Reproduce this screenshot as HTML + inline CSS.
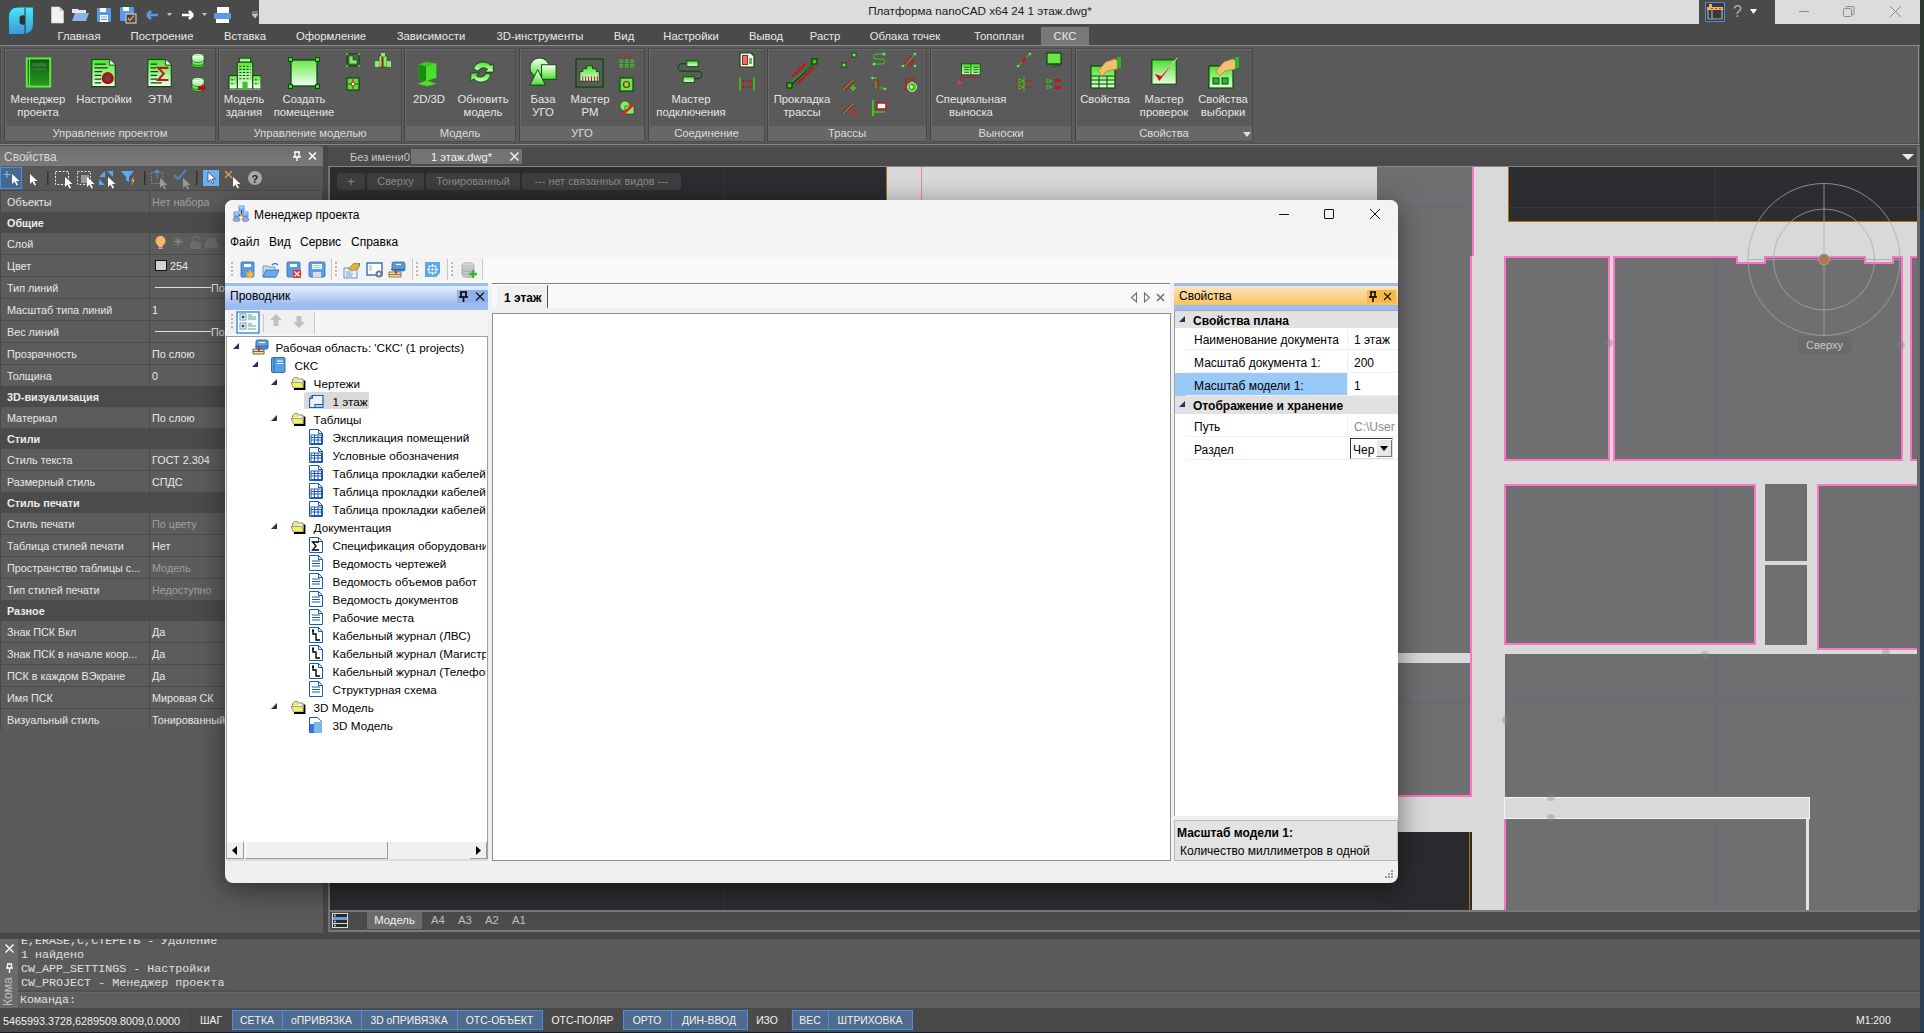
<!DOCTYPE html>
<html><head><meta charset="utf-8">
<style>
*{margin:0;padding:0;box-sizing:border-box}
html,body{width:1924px;height:1033px;overflow:hidden;background:#4a4a4a;font-family:"Liberation Sans",sans-serif;font-size:12px;color:#e6e6e6}
.a{position:absolute}
.t{position:absolute;white-space:nowrap;line-height:1}
.rb{font-size:11.3px}
.pp{font-size:10.8px}
.sbt{font-size:10.4px}
</style></head><body>

<!-- ===== TITLE BAR ===== -->
<div class="a" style="left:0;top:0;width:1924px;height:24px;background:#4a4a4a"></div>
<div class="a" style="left:259px;top:0;width:1440px;height:24px;background:#dcdcdc"></div>
<div class="a" style="left:1775px;top:0;width:145px;height:24px;background:#dcdcdc"></div>
<div class="a" style="left:1920px;top:0;width:4px;height:1033px;background:#2e3830"></div>
<div class="t" style="left:0;top:5px;width:1960px;text-align:center;color:#1a1a1a;font-size:11.7px">Платформа nanoCAD x64 24 1 этаж.dwg*</div>


<!-- logo & quick access -->
<svg class="a" style="left:8px;top:7px" width="26" height="28" viewBox="0 0 26 28">
 <defs><linearGradient id="lg1" x1="0" y1="0" x2="0" y2="1"><stop offset="0" stop-color="#48e8fa"/><stop offset="1" stop-color="#3a98d8"/></linearGradient></defs>
 <path d="M10 0H25.5V17Q25.5 27 15 27.5H0.5V10Q0.5 0 10 0Z" fill="url(#lg1)" stroke="#1a5a70" stroke-width="1"/>
 <path d="M17 1V27M12 10Q13 8 16.5 9V17Q13 18 12 16Z" fill="#333" stroke="#333" stroke-width="1"/>
</svg>
<svg class="a" style="left:50px;top:6px" width="215" height="18" viewBox="0 0 215 18">
 <path d="M1.5 1h8l4 4v12h-12z" fill="#f2f2f2" stroke="#d8d8d8" stroke-width=".6"/><path d="M9.5 1v4h4" fill="#ccc"/>
 <path d="M22 3h6l1 1h7v3H22z" fill="#e6e6e6"/><path d="M25 7h14l-3 8H22z" fill="#8ab4e8"/>
 <rect x="47" y="2" width="14" height="14" rx="1" fill="#5a9ae0"/><rect x="50" y="2" width="6" height="4" fill="#fff"/><rect x="50" y="9" width="8" height="7" fill="#fff"/><path d="M51 11h6M51 13.5h6" stroke="#5a9ae0"/>
 <rect x="70" y="1" width="14" height="14" rx="1" fill="#5a9ae0"/><rect x="73" y="1" width="6" height="4" fill="#fff"/><rect x="76" y="8" width="10" height="9" fill="#444" stroke="#ddd" stroke-width="1"/><path d="M78 12l2 2.5 4-5" stroke="#f8a040" stroke-width="1.3" fill="none"/>
 <path d="M97 9h11M97 9l4-4M97 9l4 4" stroke="#5a9ae0" stroke-width="2.6" fill="none"/>
 <path d="M117 7h5l-2.5 3z" fill="#c8c8c8"/>
 <path d="M143 9h-11M143 9l-4-4M143 9l-4 4" stroke="#fff" stroke-width="2.6" fill="none"/>
 <path d="M152 7h5l-2.5 3z" fill="#c8c8c8"/>
 <rect x="167" y="1" width="12" height="6" fill="#fff"/><rect x="164" y="7" width="17" height="6" rx="1" fill="#5a9ae0"/><rect x="166" y="13" width="13" height="4" fill="#fff"/>
 <path d="M202 6h6M202 8h6l-3 4z" fill="#c8c8c8" stroke="#c8c8c8" stroke-width=".8"/>
</svg>
<!-- title right -->
<div class="a" style="left:1705px;top:2px;width:20px;height:20px;border:1px solid #4a8ee0;background:#3a3a3a"></div>
<svg class="a" style="left:1707px;top:4px" width="16" height="16" viewBox="0 0 16 16"><rect x="2" y="0" width="3" height="3" fill="#f8b060"/><rect x="0" y="3" width="16" height="3" fill="#f8b060"/><path d="M4 4.5h2M8 4.5h2M12 4.5h2" stroke="#666"/><path d="M1 6v9h14V6M5 6v9" fill="none" stroke="#aaa" stroke-width="1.2"/></svg>
<div class="t" style="left:1733px;top:4px;font-size:16px;color:#b0b0b0">?</div>
<svg class="a" style="left:1750px;top:9px" width="7" height="5"><path d="M0 0h7L3.5 5z" fill="#fff"/></svg>
<div class="a" style="left:1799px;top:11px;width:10px;height:1px;background:#8a8a8a"></div>
<svg class="a" style="left:1843px;top:6px" width="12" height="12" viewBox="0 0 12 12"><rect x="0.5" y="2.5" width="8" height="8" rx="1" fill="none" stroke="#8a8a8a"/><path d="M3 2.5V1.5Q3 0.5 4 0.5H10Q11 0.5 11 1.5V7.5Q11 8.5 10 8.5H8.5" fill="none" stroke="#8a8a8a"/></svg>
<svg class="a" style="left:1890px;top:6px" width="11" height="11"><path d="M0 0L11 11M11 0L0 11" stroke="#8a8a8a" stroke-width="1"/></svg>

<!-- ===== RIBBON TABS ===== -->
<div class="a" style="left:1041px;top:27px;width:48px;height:19px;background:#787878"></div>
<div class="t rb" style="left:19px;top:31px;width:120px;text-align:center;color:#e8e8e8">Главная</div>
<div class="t rb" style="left:102px;top:31px;width:120px;text-align:center;color:#e8e8e8">Построение</div>
<div class="t rb" style="left:185px;top:31px;width:120px;text-align:center;color:#e8e8e8">Вставка</div>
<div class="t rb" style="left:271px;top:31px;width:120px;text-align:center;color:#e8e8e8">Оформление</div>
<div class="t rb" style="left:371px;top:31px;width:120px;text-align:center;color:#e8e8e8">Зависимости</div>
<div class="t rb" style="left:480px;top:31px;width:120px;text-align:center;color:#e8e8e8">3D-инструменты</div>
<div class="t rb" style="left:564px;top:31px;width:120px;text-align:center;color:#e8e8e8">Вид</div>
<div class="t rb" style="left:631px;top:31px;width:120px;text-align:center;color:#e8e8e8">Настройки</div>
<div class="t rb" style="left:706px;top:31px;width:120px;text-align:center;color:#e8e8e8">Вывод</div>
<div class="t rb" style="left:765px;top:31px;width:120px;text-align:center;color:#e8e8e8">Растр</div>
<div class="t rb" style="left:845px;top:31px;width:120px;text-align:center;color:#e8e8e8">Облака точек</div>
<div class="t rb" style="left:939px;top:31px;width:120px;text-align:center;color:#e8e8e8">Топоплан</div>
<div class="t rb" style="left:1005px;top:31px;width:120px;text-align:center;color:#e8e8e8">СКС</div>
<!-- ===== RIBBON PANEL ===== -->
<div class="a" style="left:0;top:45px;width:1920px;height:101px;background:#4e4e4e;border-top:1px solid #8a8a8a;border-bottom:1px solid #4a4a4a"></div>
<div class="a" style="left:0;top:144px;width:1920px;height:1px;background:#8c8c8c"></div>
<div class="a" style="left:1px;top:46px;width:1918px;height:97px;background:#5b5b5b;border-right:1px solid #8a8a8a"></div>
<div class="a" style="left:4px;top:48px;width:212px;height:94px;background:#5a5a5a;border:1px solid #4a4a4a;border-left-color:#444;box-shadow:inset 1px 1px 0 #6a6a6a"></div>
<div class="a" style="left:5px;top:126px;width:210px;height:15px;background:#676767"></div>
<div class="t rb" style="left:4px;top:128px;width:212px;text-align:center;color:#dcdcdc">Управление проектом</div>
<div class="a" style="left:218px;top:48px;width:184px;height:94px;background:#5a5a5a;border:1px solid #4a4a4a;border-left-color:#444;box-shadow:inset 1px 1px 0 #6a6a6a"></div>
<div class="a" style="left:219px;top:126px;width:182px;height:15px;background:#676767"></div>
<div class="t rb" style="left:218px;top:128px;width:184px;text-align:center;color:#dcdcdc">Управление моделью</div>
<div class="a" style="left:404px;top:48px;width:112px;height:94px;background:#5a5a5a;border:1px solid #4a4a4a;border-left-color:#444;box-shadow:inset 1px 1px 0 #6a6a6a"></div>
<div class="a" style="left:405px;top:126px;width:110px;height:15px;background:#676767"></div>
<div class="t rb" style="left:404px;top:128px;width:112px;text-align:center;color:#dcdcdc">Модель</div>
<div class="a" style="left:519px;top:48px;width:126px;height:94px;background:#5a5a5a;border:1px solid #4a4a4a;border-left-color:#444;box-shadow:inset 1px 1px 0 #6a6a6a"></div>
<div class="a" style="left:520px;top:126px;width:124px;height:15px;background:#676767"></div>
<div class="t rb" style="left:519px;top:128px;width:126px;text-align:center;color:#dcdcdc">УГО</div>
<div class="a" style="left:648px;top:48px;width:117px;height:94px;background:#5a5a5a;border:1px solid #4a4a4a;border-left-color:#444;box-shadow:inset 1px 1px 0 #6a6a6a"></div>
<div class="a" style="left:649px;top:126px;width:115px;height:15px;background:#676767"></div>
<div class="t rb" style="left:648px;top:128px;width:117px;text-align:center;color:#dcdcdc">Соединение</div>
<div class="a" style="left:767px;top:48px;width:160px;height:94px;background:#5a5a5a;border:1px solid #4a4a4a;border-left-color:#444;box-shadow:inset 1px 1px 0 #6a6a6a"></div>
<div class="a" style="left:768px;top:126px;width:158px;height:15px;background:#676767"></div>
<div class="t rb" style="left:767px;top:128px;width:160px;text-align:center;color:#dcdcdc">Трассы</div>
<div class="a" style="left:930px;top:48px;width:142px;height:94px;background:#5a5a5a;border:1px solid #4a4a4a;border-left-color:#444;box-shadow:inset 1px 1px 0 #6a6a6a"></div>
<div class="a" style="left:931px;top:126px;width:140px;height:15px;background:#676767"></div>
<div class="t rb" style="left:930px;top:128px;width:142px;text-align:center;color:#dcdcdc">Выноски</div>
<div class="a" style="left:1075px;top:48px;width:178px;height:94px;background:#5a5a5a;border:1px solid #4a4a4a;border-left-color:#444;box-shadow:inset 1px 1px 0 #6a6a6a"></div>
<div class="a" style="left:1076px;top:126px;width:176px;height:15px;background:#676767"></div>
<div class="t rb" style="left:1075px;top:128px;width:178px;text-align:center;color:#dcdcdc">Свойства</div>
<div class="a" style="left:23px;top:57px;width:30px;height:31px"><svg width="30" height="31" viewBox="0 0 32 32"><defs><linearGradient id="gm" x1="0" y1="0" x2="0" y2="1"><stop offset="0" stop-color="#0c5a0c"/><stop offset="1" stop-color="#2a9a22"/></linearGradient></defs><rect x="4" y="1" width="25" height="30" fill="url(#gm)" stroke="#5cf03c" stroke-width="2"/><path d="M7 1v30" stroke="#5cf03c" stroke-width="1.2"/><rect x="10" y="6" width="15" height="3.5" fill="#4a7a4a" opacity=".8"/><rect x="10" y="12" width="15" height="1.5" fill="#4a7a4a" opacity=".8"/></svg></div>
<div class="t rb" style="left:-22px;top:94px;width:120px;text-align:center;color:#e6e6e6">Менеджер</div>
<div class="t rb" style="left:-22px;top:107px;width:120px;text-align:center;color:#e6e6e6">проекта</div>
<div class="a" style="left:89px;top:58px;width:30px;height:31px"><svg width="30" height="31" viewBox="0 0 32 32"><defs><linearGradient id="gs" x1="0" y1="0" x2="0" y2="1"><stop offset="0" stop-color="#4ae42a"/><stop offset="1" stop-color="#f4fff0"/></linearGradient></defs><path d="M3 1h19l6 6v23H3z" fill="url(#gs)" stroke="#0a4a0a" stroke-width="1.2"/><path d="M22 1v6h6" fill="#fff" stroke="#0a4a0a"/><path d="M6 6h12M6 10h14M6 14h8M6 18h7M6 22h7M6 26h7" stroke="#0a4a0a" stroke-width="1.1"/><circle cx="20" cy="21" r="6.5" fill="#b01010"/><circle cx="20" cy="21" r="3" fill="#505050"/></svg></div>
<div class="t rb" style="left:44px;top:94px;width:120px;text-align:center;color:#e6e6e6">Настройки</div>
<div class="a" style="left:145px;top:58px;width:30px;height:31px"><svg width="30" height="31" viewBox="0 0 32 32"><defs><linearGradient id="ge" x1="0" y1="0" x2="0" y2="1"><stop offset="0" stop-color="#4ae42a"/><stop offset="1" stop-color="#f4fff0"/></linearGradient></defs><path d="M3 1h19l6 6v23H3z" fill="url(#ge)" stroke="#0a4a0a" stroke-width="1.2"/><path d="M22 1v6h6" fill="#fff" stroke="#0a4a0a"/><path d="M6 6h7M6 10h6M6 14h8M6 18h7M6 22h7M6 26h12" stroke="#0a4a0a" stroke-width="1.1"/><path d="M25 10H14l6 6-6 7h11" fill="none" stroke="#c01818" stroke-width="2.2"/></svg></div>
<div class="t rb" style="left:100px;top:94px;width:120px;text-align:center;color:#e6e6e6">ЭТМ</div>
<div class="a" style="left:228px;top:57px;width:33px;height:33px"><svg width="33" height="33" viewBox="0 0 32 32"><defs><linearGradient id="gb" x1="0" y1="0" x2="0" y2="1"><stop offset="0" stop-color="#5ae83a"/><stop offset="1" stop-color="#ffffff"/></linearGradient></defs><rect x="11" y="1" width="11" height="4" fill="url(#gb)" stroke="#0a4a0a"/><rect x="9" y="5" width="15" height="26" fill="url(#gb)" stroke="#0a4a0a"/><rect x="1" y="18" width="8" height="13" fill="url(#gb)" stroke="#0a4a0a"/><rect x="24" y="18" width="8" height="13" fill="url(#gb)" stroke="#0a4a0a"/><path d="M11 9h11M11 12h11M11 15h11M11 18h11M11 21h11M3 22h4M26 22h4M3 26h4M26 26h4" stroke="#0a4a0a" stroke-dasharray="2 1.5"/><rect x="14" y="24" width="5" height="7" fill="#3ac81a"/><path d="M1 32h31" stroke="#ccc"/></svg></div>
<div class="t rb" style="left:184px;top:94px;width:120px;text-align:center;color:#e6e6e6">Модель</div>
<div class="t rb" style="left:184px;top:107px;width:120px;text-align:center;color:#e6e6e6">здания</div>
<div class="a" style="left:288px;top:57px;width:32px;height:32px"><svg width="32" height="32" viewBox="0 0 32 32"><defs><linearGradient id="gr" x1="0" y1="0" x2="0" y2="1"><stop offset="0" stop-color="#6ae84a"/><stop offset="1" stop-color="#f0fff0"/></linearGradient></defs><rect x="3" y="3" width="26" height="26" fill="url(#gr)" stroke="#0a4a0a" stroke-width="1.3"/><rect x="0.5" y="0.5" width="4" height="4" fill="#3ae81a" stroke="#0a4a0a"/><rect x="27.5" y="0.5" width="4" height="4" fill="#3ae81a" stroke="#0a4a0a"/><rect x="0.5" y="27.5" width="4" height="4" fill="#3ae81a" stroke="#0a4a0a"/><rect x="27.5" y="27.5" width="4" height="4" fill="#3ae81a" stroke="#0a4a0a"/></svg></div>
<div class="t rb" style="left:244px;top:94px;width:120px;text-align:center;color:#e6e6e6">Создать</div>
<div class="t rb" style="left:244px;top:107px;width:120px;text-align:center;color:#e6e6e6">помещение</div>
<div class="a" style="left:416px;top:58px;width:27px;height:31px"><svg width="27" height="31" viewBox="0 0 32 32"><path d="M3 5l9-3 12 2v17l-12 4-9-3z" fill="#3ac81a"/><path d="M3 5l9 3v17l-9-3z" fill="#1a8a10"/><path d="M12 8l12-4v17l-12 4z" fill="#4ae02a"/><path d="M2 28l11-4 11 4-11 3z" fill="#4ae02a"/></svg></div>
<div class="t rb" style="left:369px;top:94px;width:120px;text-align:center;color:#e6e6e6">2D/3D</div>
<div class="a" style="left:468px;top:58px;width:30px;height:30px"><svg width="30" height="30" viewBox="0 0 32 32"><defs><linearGradient id="gu" x1="0" y1="0" x2="0" y2="1"><stop offset="0" stop-color="#4ae02a"/><stop offset="1" stop-color="#d8ffc8"/></linearGradient></defs><path d="M6 12a10 9 0 0 1 18-4l3-2v9h-9l3-3a6 5 0 0 0-10 2z" fill="url(#gu)" stroke="#0a4a0a" stroke-width="1"/><path d="M24 17a10 9 0 0 1-18 5l-3 3v-9h9l-3 3a6 5 0 0 0 10-3z" fill="url(#gu)" stroke="#0a4a0a" stroke-width="1"/></svg></div>
<div class="t rb" style="left:423px;top:94px;width:120px;text-align:center;color:#e6e6e6">Обновить</div>
<div class="t rb" style="left:423px;top:107px;width:120px;text-align:center;color:#e6e6e6">модель</div>
<div class="a" style="left:528px;top:57px;width:31px;height:31px"><svg width="31" height="31" viewBox="0 0 32 32"><defs><linearGradient id="gg" x1="0" y1="0" x2="0" y2="1"><stop offset="0" stop-color="#f8fff8"/><stop offset="1" stop-color="#4ae02a"/></linearGradient></defs><circle cx="12" cy="11" r="10" fill="url(#gg)" stroke="#0a4a0a"/><rect x="14" y="8" width="15" height="15" fill="url(#gg)" stroke="#0a4a0a"/><path d="M10 13l-8 16h16z" fill="url(#gg)" stroke="#0a4a0a"/></svg></div>
<div class="t rb" style="left:483px;top:94px;width:120px;text-align:center;color:#e6e6e6">База</div>
<div class="t rb" style="left:483px;top:107px;width:120px;text-align:center;color:#e6e6e6">УГО</div>
<div class="a" style="left:575px;top:58px;width:31px;height:31px"><svg width="31" height="31" viewBox="0 0 32 32"><defs><linearGradient id="gp" x1="0" y1="0" x2="0" y2="1"><stop offset="0" stop-color="#4ae02a"/><stop offset="1" stop-color="#e8ffe0"/></linearGradient></defs><rect x="1" y="1" width="28" height="29" fill="none" stroke="#0a4a0a" stroke-width="1.4"/><path d="M5 24V14h3v-3h4V8h6v3h4v3h3v10z" fill="url(#gp)" stroke="#0a4a0a"/><path d="M8 19v5M11 19v5M14 19v5M17 19v5M20 19v5M23 19v5" stroke="#b01010" stroke-width="1"/></svg></div>
<div class="t rb" style="left:530px;top:94px;width:120px;text-align:center;color:#e6e6e6">Мастер</div>
<div class="t rb" style="left:530px;top:107px;width:120px;text-align:center;color:#e6e6e6">РМ</div>
<div class="a" style="left:676px;top:58px;width:31px;height:30px"><svg width="31" height="30" viewBox="0 0 32 32"><defs><linearGradient id="gc" x1="0" y1="0" x2="0" y2="1"><stop offset="0" stop-color="#3ae01a"/><stop offset="1" stop-color="#f0fff0"/></linearGradient></defs><path d="M10 6H6a4 4 0 0 0 0 8h17a4 4 0 0 1 0 8h-4" fill="none" stroke="#0a4a0a" stroke-width="1.1"/><rect x="11" y="3" width="12" height="6" fill="url(#gc)" stroke="#0a4a0a"/><rect x="7" y="20" width="12" height="6" fill="url(#gc)" stroke="#0a4a0a"/></svg></div>
<div class="t rb" style="left:631px;top:94px;width:120px;text-align:center;color:#e6e6e6">Мастер</div>
<div class="t rb" style="left:631px;top:107px;width:120px;text-align:center;color:#e6e6e6">подключения</div>
<div class="a" style="left:786px;top:57px;width:32px;height:32px"><svg width="32" height="32" viewBox="0 0 32 32"><path d="M4 29L28 5" stroke="#0a4a0a" stroke-width="2"/><path d="M5 26L27 6" stroke="#3ac81a" stroke-width="1"/><path d="M6 20L20 6M12 26L28 10" stroke="#c01818" stroke-width="2.2"/><rect x="1" y="26" width="5" height="5" fill="#3ac81a" stroke="#0a4a0a" stroke-width="1.4"/><rect x="26" y="2" width="5" height="5" fill="#3ac81a" stroke="#0a4a0a" stroke-width="1.4"/></svg></div>
<div class="t rb" style="left:742px;top:94px;width:120px;text-align:center;color:#e6e6e6">Прокладка</div>
<div class="t rb" style="left:742px;top:107px;width:120px;text-align:center;color:#e6e6e6">трассы</div>
<div class="a" style="left:955px;top:63px;width:30px;height:27px"><svg width="30" height="27" viewBox="0 0 32 32"><defs><linearGradient id="gk" x1="0" y1="0" x2="0" y2="1"><stop offset="0" stop-color="#4ae02a"/><stop offset="1" stop-color="#c8ffb8"/></linearGradient></defs><rect x="6" y="1" width="22" height="13" fill="url(#gk)" stroke="#0a4a0a"/><path d="M17 1v13M9 5h6M9 8h6M9 11h6M20 5h6M20 8h6M20 11h6" stroke="#0a4a0a"/><path d="M28 17H6L3 23" stroke="#c01818" stroke-width="1.2" fill="none"/><path d="M2 20l5 3-5 3z" fill="#e0308a"/></svg></div>
<div class="t rb" style="left:911px;top:94px;width:120px;text-align:center;color:#e6e6e6">Специальная</div>
<div class="t rb" style="left:911px;top:107px;width:120px;text-align:center;color:#e6e6e6">выноска</div>
<div class="a" style="left:1089px;top:57px;width:32px;height:32px"><svg width="32" height="32" viewBox="0 0 32 32"><defs><linearGradient id="gq" x1="0" y1="0" x2="0" y2="1"><stop offset="0" stop-color="#4ae02a"/><stop offset="1" stop-color="#e0ffd8"/></linearGradient></defs><rect x="2" y="9" width="24" height="22" fill="url(#gq)" stroke="#0a4a0a" stroke-width="1.2"/><path d="M2 19h24M2 23h24M2 27h24M10 19v12M18 19v12" stroke="#0a4a0a"/><path d="M9 14l8-9 9-3 4 3-2 7-10 2-5 5z" fill="#f2c070" stroke="#c88838"/><rect x="28" y="0" width="4" height="11" fill="#2ab82a"/></svg></div>
<div class="t rb" style="left:1045px;top:94px;width:120px;text-align:center;color:#e6e6e6">Свойства</div>
<div class="a" style="left:1150px;top:57px;width:30px;height:30px"><svg width="30" height="30" viewBox="0 0 32 32"><defs><linearGradient id="gz" x1="0" y1="0" x2="0" y2="1"><stop offset="0" stop-color="#4ae02a"/><stop offset="1" stop-color="#e8ffe0"/></linearGradient></defs><rect x="2" y="3" width="26" height="26" fill="url(#gz)" stroke="#0a4a0a" stroke-width="1.2"/><path d="M4 17l6 9 19-25-17 19z" fill="#d01010" stroke="#fff" stroke-width=".6"/></svg></div>
<div class="t rb" style="left:1104px;top:94px;width:120px;text-align:center;color:#e6e6e6">Мастер</div>
<div class="t rb" style="left:1104px;top:107px;width:120px;text-align:center;color:#e6e6e6">проверок</div>
<div class="a" style="left:1207px;top:57px;width:32px;height:32px"><svg width="32" height="32" viewBox="0 0 32 32"><defs><linearGradient id="gx" x1="0" y1="0" x2="0" y2="1"><stop offset="0" stop-color="#4ae02a"/><stop offset="1" stop-color="#e0ffd8"/></linearGradient></defs><rect x="2" y="9" width="24" height="22" fill="url(#gx)" stroke="#0a4a0a" stroke-width="1.2"/><rect x="6" y="21" width="6" height="6" fill="#2ab82a" stroke="#0a4a0a"/><rect x="15" y="21" width="6" height="6" fill="#2ab82a" stroke="#0a4a0a"/><path d="M9 14l8-9 9-3 4 3-2 7-10 2-5 5z" fill="#f2c070" stroke="#c88838"/><rect x="28" y="0" width="4" height="11" fill="#2ab82a"/></svg></div>
<div class="t rb" style="left:1163px;top:94px;width:120px;text-align:center;color:#e6e6e6">Свойства</div>
<div class="t rb" style="left:1163px;top:107px;width:120px;text-align:center;color:#e6e6e6">выборки</div>
<div class="a" style="left:190px;top:52px;width:16px;height:16px"><svg width="16" height="16" viewBox="0 0 16 16"><defs><linearGradient id="d1" x1="0" y1="0" x2="0" y2="1"><stop offset="0" stop-color="#f0fff0"/><stop offset="1" stop-color="#3ad81a"/></linearGradient></defs><ellipse cx="8" cy="4" rx="6" ry="2.5" fill="url(#d1)" stroke="#0a4a0a" stroke-width=".6"/><path d="M2 4v9a6 2.5 0 0 0 12 0V4" fill="url(#d1)" stroke="#0a4a0a" stroke-width=".6"/><path d="M2 8a6 2.5 0 0 0 12 0M2 11a6 2.5 0 0 0 12 0" fill="none" stroke="#0a4a0a" stroke-width=".6"/></svg></div>
<div class="a" style="left:190px;top:76px;width:16px;height:16px"><svg width="16" height="16" viewBox="0 0 16 16"><defs><linearGradient id="d1" x1="0" y1="0" x2="0" y2="1"><stop offset="0" stop-color="#f0fff0"/><stop offset="1" stop-color="#3ad81a"/></linearGradient></defs><ellipse cx="8" cy="4" rx="6" ry="2.5" fill="url(#d1)" stroke="#0a4a0a" stroke-width=".6"/><path d="M2 4v9a6 2.5 0 0 0 12 0V4" fill="url(#d1)" stroke="#0a4a0a" stroke-width=".6"/><path d="M2 8a6 2.5 0 0 0 12 0M2 11a6 2.5 0 0 0 12 0" fill="none" stroke="#0a4a0a" stroke-width=".6"/><path d="M8 10h4V8l4 4-4 4v-2H8z" fill="#b01010"/></svg></div>
<div class="a" style="left:345px;top:52px;width:16px;height:16px"><svg width="16" height="16" viewBox="0 0 16 16"><rect x="2" y="2" width="12" height="12" fill="none" stroke="#0a4a0a" stroke-width="1.2"/><path d="M4 4h4v4h4v4H4z" fill="#8ae86a" stroke="#0a4a0a" stroke-width=".6"/><circle cx="2" cy="2" r="1.2" fill="#3ac81a"/><circle cx="14" cy="2" r="1.2" fill="#3ac81a"/><circle cx="2" cy="14" r="1.2" fill="#3ac81a"/><circle cx="14" cy="14" r="1.2" fill="#3ac81a"/></svg></div>
<div class="a" style="left:345px;top:76px;width:16px;height:16px"><svg width="16" height="16" viewBox="0 0 16 16"><rect x="2" y="2" width="12" height="12" fill="#5ae03a" stroke="#0a4a0a" stroke-width="1.2"/><path d="M8 3v10M3 8h10" stroke="#b01010" stroke-width="1"/><rect x="6.5" y="6.5" width="3" height="3" fill="#fff" stroke="#b01010" stroke-width=".6"/></svg></div>
<div class="a" style="left:375px;top:52px;width:16px;height:16px"><svg width="16" height="16" viewBox="0 0 16 16"><rect x="4" y="4" width="8" height="11" fill="#8ae86a" stroke="#0a4a0a" stroke-width=".6"/><rect x="6" y="1" width="4" height="3" fill="#8ae86a"/><rect x="6.5" y="5" width="2" height="10" fill="#b01010"/><rect x="0" y="9" width="4" height="6" fill="#8ae86a"/><rect x="12" y="9" width="4" height="6" fill="#8ae86a"/></svg></div>
<div class="a" style="left:619px;top:52px;width:16px;height:16px"><svg width="16" height="16" viewBox="0 0 16 16"><text x="0" y="6" font-size="6" fill="#c01818" font-family="Liberation Sans">1 2 3</text><g fill="none" stroke="#3ac81a" stroke-width="1"><rect x="1" y="8" width="2.5" height="2.5"/><rect x="6.5" y="8" width="2.5" height="2.5"/><rect x="12" y="8" width="2.5" height="2.5"/><rect x="1" y="12.5" width="2.5" height="2.5"/><rect x="6.5" y="12.5" width="2.5" height="2.5"/><rect x="12" y="12.5" width="2.5" height="2.5"/></g></svg></div>
<div class="a" style="left:619px;top:77px;width:16px;height:16px"><svg width="16" height="16" viewBox="0 0 16 16"><rect x="1" y="1" width="13" height="13" fill="#6ae84a" stroke="#0a4a0a" stroke-width="1.2"/><circle cx="7.5" cy="7.5" r="3" fill="none" stroke="#b01010" stroke-width="1.2"/></svg></div>
<div class="a" style="left:619px;top:100px;width:16px;height:16px"><svg width="16" height="16" viewBox="0 0 16 16"><circle cx="6" cy="6" r="5" fill="#8ae86a" stroke="#0a4a0a" stroke-width=".6"/><rect x="6" y="6" width="9" height="8" fill="#8ae86a" stroke="#0a4a0a" stroke-width=".6"/><path d="M3 15l12-11" stroke="#e02020" stroke-width="2.4"/></svg></div>
<div class="a" style="left:739px;top:52px;width:16px;height:16px"><svg width="16" height="16" viewBox="0 0 16 16"><path d="M1 1h11l3 3v11H1z" fill="#e8ffe0" stroke="#0a4a0a" stroke-width="1.2"/><rect x="3" y="3" width="6" height="10" fill="#c01818"/><path d="M4 5h4M4 7h4M4 9h4M4 11h4" stroke="#fff" stroke-width=".8"/><path d="M10 7h3M10 9h3M10 11h3" stroke="#0a4a0a"/></svg></div>
<div class="a" style="left:739px;top:76px;width:16px;height:16px"><svg width="16" height="16" viewBox="0 0 16 16"><path d="M1 1v14M15 1v14" stroke="#3ac81a" stroke-width="1.6"/><path d="M3 5h10M3 11h10" stroke="#c01818" stroke-width="1.1"/><path d="M3 5l2-2v4zM13 5l-2-2v4zM3 11l2-2v4zM13 11l-2-2v4z" fill="#c01818"/></svg></div>
<div class="a" style="left:841px;top:52px;width:16px;height:16px"><svg width="16" height="16" viewBox="0 0 16 16"><path d="M3 13L13 3" stroke="#c01818" stroke-width="1"/><rect x="1" y="11" width="4" height="4" fill="#6ae84a" stroke="#0a4a0a"/><rect x="11" y="1" width="4" height="4" fill="#6ae84a" stroke="#0a4a0a"/></svg></div>
<div class="a" style="left:841px;top:76px;width:16px;height:16px"><svg width="16" height="16" viewBox="0 0 16 16"><path d="M1 13L11 3M3 15L13 5M5 15l8-8" stroke="#c01818" stroke-width="1"/><path d="M2 14L12 4" stroke="#3ac81a"/><path d="M12 9v6M9 12h6" stroke="#3ac81a" stroke-width="2"/></svg></div>
<div class="a" style="left:841px;top:100px;width:16px;height:16px"><svg width="16" height="16" viewBox="0 0 16 16"><path d="M1 13L11 3M3 15L13 5" stroke="#c01818" stroke-width="1"/><path d="M2 14L12 4" stroke="#3ac81a"/><path d="M10 10l5 5M15 10l-5 5" stroke="#e02020" stroke-width="1.6"/></svg></div>
<div class="a" style="left:871px;top:52px;width:16px;height:16px"><svg width="16" height="16" viewBox="0 0 16 16"><path d="M13 2H5a2.5 2.5 0 0 0 0 5h6a2.5 2.5 0 0 1 0 5H3" fill="none" stroke="#3ac81a" stroke-width="1"/><circle cx="13" cy="2" r="1.5" fill="#6ae84a"/><circle cx="3" cy="12" r="1.5" fill="#6ae84a"/></svg></div>
<div class="a" style="left:871px;top:76px;width:16px;height:16px"><svg width="16" height="16" viewBox="0 0 16 16"><path d="M1 2h4v10h9" fill="none" stroke="#3ac81a" stroke-width="1.2"/><path d="M4 4h3v10" fill="none" stroke="#c01818" stroke-width="1.4"/><circle cx="1.5" cy="2" r="1.3" fill="#6ae84a"/><circle cx="14" cy="13" r="1.3" fill="#6ae84a"/></svg></div>
<div class="a" style="left:871px;top:100px;width:16px;height:16px"><svg width="16" height="16" viewBox="0 0 16 16"><path d="M2 0v16" stroke="#3ac81a" stroke-width="2"/><path d="M3 12h11" stroke="#3ac81a" stroke-width="1.5"/><rect x="6" y="3" width="9" height="6" fill="#fff" stroke="#c01818" stroke-width="1.5"/></svg></div>
<div class="a" style="left:901px;top:52px;width:16px;height:16px"><svg width="16" height="16" viewBox="0 0 16 16"><path d="M2 14L11 3M6 14l7-7M9 14l4-4" stroke="#c01818" stroke-width="1.2"/><path d="M4 14L13 3" stroke="#3ac81a"/><circle cx="2" cy="14" r="1.3" fill="#6ae84a"/><circle cx="14" cy="2" r="1.3" fill="#6ae84a"/><circle cx="14" cy="14" r="1.3" fill="#6ae84a"/></svg></div>
<div class="a" style="left:901px;top:76px;width:16px;height:16px"><svg width="16" height="16" viewBox="0 0 16 16"><path d="M2 13h3V3h9M5 14h3V6h7" fill="none" stroke="#c01818" stroke-width="1.2"/><circle cx="11" cy="11" r="4.5" fill="#3ac81a" stroke="#fff" stroke-width=".8"/><path d="M9.5 9v4l3-2z" fill="#fff"/></svg></div>
<div class="a" style="left:1016px;top:52px;width:16px;height:16px"><svg width="16" height="16" viewBox="0 0 16 16"><path d="M2 14L14 2" stroke="#3ac81a" stroke-width="1"/><path d="M5 9l4-4 2 2-4 4z" fill="#c01818"/><circle cx="2" cy="14" r="1.3" fill="#6ae84a"/><circle cx="14" cy="2" r="1.3" fill="#6ae84a"/></svg></div>
<div class="a" style="left:1016px;top:76px;width:16px;height:16px"><svg width="16" height="16" viewBox="0 0 16 16"><path d="M0 5h16M0 11h16" stroke="#c01818" stroke-width="1"/><path d="M8 1v14" stroke="#3ac81a"/><path d="M3 3l5 2-5 2zM3 9l5 2-5 2z" fill="none" stroke="#3ac81a"/></svg></div>
<div class="a" style="left:1046px;top:52px;width:16px;height:16px"><svg width="16" height="16" viewBox="0 0 16 16"><rect x="1" y="1" width="14" height="11" fill="#6ae84a" stroke="#0a4a0a" stroke-width="1.2"/><path d="M1 12h14M6 14h8" stroke="#0a4a0a" stroke-dasharray="2 1"/></svg></div>
<div class="a" style="left:1046px;top:76px;width:16px;height:16px"><svg width="16" height="16" viewBox="0 0 16 16"><path d="M1 3l5 2-5 2zM1 9l5 2-5 2z" fill="none" stroke="#3ac81a"/><rect x="9" y="3" width="6" height="3" fill="#c01818"/><rect x="9" y="10" width="6" height="3" fill="#c01818"/></svg></div>
<svg class="a" style="left:1243px;top:132px" width="8" height="5"><path d="M0 0h8L4 5z" fill="#e0e0e0"/></svg>
<!-- ===== PROPERTIES PANEL ===== -->
<div class="a" style="left:0;top:146px;width:323px;height:787px;background:#5a5a5a;overflow:hidden">
<div class="a" style="left:0;top:0;width:323px;height:20px;background:linear-gradient(#6e6e6e,#7a7a7a);border-top-right-radius:3px"></div>
<div class="t" style="left:4px;top:5px;color:#d6d6d6;font-size:12px">Свойства</div>
<svg class="a" style="left:292px;top:5px" width="28" height="10" viewBox="0 0 28 10">
<path d="M2 1h6M3 1v5M7 1v5M1 6h8M5 6v4" stroke="#fff" stroke-width="1.4" fill="none"/>
<path d="M17 1.5L24 8.5M24 1.5L17 8.5" stroke="#fff" stroke-width="1.6"/>
</svg>
<div class="a" style="left:0;top:20px;width:323px;height:24px;background:#575757"></div>
<svg class="a" style="left:0;top:20px" width="270" height="24" viewBox="0 0 270 24">
<rect x="0.5" y="1.5" width="21" height="21" fill="#48678c" stroke="#4a90e2"/>
<path d="M7 5v7M3.5 8.5h7" stroke="#7ab8f8" stroke-width="1.2"/><path d="M12 8v10l2.5-2.5 2 4 1.5-.8-2-3.8h3.5z" fill="#fff"/>
<path d="M30 8v10l2.5-2.5 2 4 1.5-.8-2-3.8h3.5z" fill="#fff"/>
<rect x="47" y="5" width="1.5" height="14" fill="#333"/>
<rect x="55.5" y="5.5" width="13" height="13" fill="none" stroke="#eee" stroke-dasharray="2 1.5"/><path d="M65 11v10l2.5-2.5 2 4 1.5-.8-2-3.8h3.5z" fill="#fff"/>
<rect x="77.5" y="5.5" width="13" height="13" fill="none" stroke="#ddd" stroke-dasharray="2 1.5"/><rect x="81" y="9" width="8" height="8" fill="#999"/><path d="M87 11v10l2.5-2.5 2 4 1.5-.8-2-3.8h3.5z" fill="#fff"/>
<path d="M99 11l6-6v6zM99 13v6h6zM107 5h6v6z" fill="#5aa8f8"/><path d="M108 11v10l2.5-2.5 2 4 1.5-.8-2-3.8h3.5z" fill="#fff"/>
<path d="M121 5h13l-5 6v5l-3-2v-3z" fill="#5aa8f8"/><path d="M134 10l-3 5h2l-2 5 4-6h-2z" fill="#f0a860"/>
<rect x="144" y="5" width="1.5" height="14" fill="#333"/>
<rect x="151.5" y="6.5" width="11" height="11" fill="none" stroke="#888" stroke-dasharray="2 1.5"/><path d="M157 4v8M154.5 6.5l2.5-2.5 2.5 2.5" stroke="#5a8ac8" stroke-width="1.3" fill="none"/><path d="M160 12v10l2.5-2.5 2 4 1.5-.8-2-3.8h3.5z" fill="#999"/>
<path d="M174 9l4 4 8-9" stroke="#5a7ab8" stroke-width="2.5" fill="none"/><path d="M183 12v10l2.5-2.5 2 4 1.5-.8-2-3.8h3.5z" fill="#999"/>
<rect x="196" y="5" width="1.5" height="14" fill="#333"/>
<rect x="203" y="4" width="16" height="16" fill="#6ab0f8"/><path d="M208 6v10l2.5-2.5 2 4 1.5-.8-2-3.8h3.5z" fill="#fff"/><path d="M208 6v10l2.5-2.5 2 4 1.5-.8-2-3.8h3.5z" fill="none" stroke="#333" stroke-width=".7"/>
<path d="M225 5l7 7M232 5l-7 7" stroke="#f0a050" stroke-width="1.1"/><path d="M233 11v10l2.5-2.5 2 4 1.5-.8-2-3.8h3.5z" fill="#fff"/>
<circle cx="255" cy="12" r="7" fill="#aaa"/><text x="251.5" y="16.5" font-size="11" font-weight="bold" fill="#222" font-family="Liberation Sans">?</text>
</svg>
<div class="a" style="left:0;top:44px;width:323px;height:540px;background:#4a4a4a"></div>
<div class="a" style="left:0;top:0;width:323px;height:786px">
<div class="a" style="left:0;top:-146px;width:323px;height:1033px">
<div class="a" style="left:1px;top:191px;width:148px;height:21px;background:#5c5c5c"></div>
<div class="a" style="left:150px;top:191px;width:172px;height:21px;background:#5c5c5c"></div>
<div class="t pp" style="left:7px;top:197px;color:#e8e8e8">Объекты</div>
<div class="t pp" style="left:152px;top:197px;color:#a0a0a0">Нет набора</div>
<div class="a" style="left:1px;top:212px;width:322px;height:20px;background:#4b4b4b"></div>
<div class="t pp" style="left:7px;top:218px;font-weight:bold;color:#ececec">Общие</div>
<div class="a" style="left:1px;top:233px;width:148px;height:21px;background:#5c5c5c"></div>
<div class="a" style="left:150px;top:233px;width:172px;height:21px;background:#5c5c5c"></div>
<div class="t pp" style="left:7px;top:239px;color:#e8e8e8">Слой</div>
<svg class="a" style="left:154px;top:235px" width="70" height="16" viewBox="0 0 70 16">
<circle cx="6.5" cy="6" r="5" fill="#f7b56a"/><rect x="4.5" y="10" width="4" height="2" fill="#f0c080"/><rect x="4.5" y="12.5" width="4" height="1.5" fill="#d8b080"/>
<path d="M24 2v9M19.5 6.5h9M21 3.5l6 6M27 3.5l-6 6" stroke="#888" stroke-width="1"/>
<rect x="36" y="7" width="11" height="7" fill="#6c6c6c"/><path d="M39 7V4a3 3 0 0 1 6 0" fill="none" stroke="#6c6c6c" stroke-width="1.5"/>
<rect x="53" y="3" width="9" height="4" fill="#6c6c6c"/><rect x="51" y="7" width="13" height="6" rx="1" fill="#6c6c6c"/>
</svg>
<div class="a" style="left:1px;top:255px;width:148px;height:21px;background:#5c5c5c"></div>
<div class="a" style="left:150px;top:255px;width:172px;height:21px;background:#5c5c5c"></div>
<div class="t pp" style="left:7px;top:261px;color:#e8e8e8">Цвет</div>
<div class="a" style="left:155px;top:260px;width:12px;height:11px;background:#d4d4d4;border:1px solid #111"></div>
<div class="t pp" style="left:170px;top:261px;color:#e8e8e8">254</div>
<div class="a" style="left:1px;top:277px;width:148px;height:21px;background:#5c5c5c"></div>
<div class="a" style="left:150px;top:277px;width:172px;height:21px;background:#5c5c5c"></div>
<div class="t pp" style="left:7px;top:283px;color:#e8e8e8">Тип линий</div>
<div class="a" style="left:155px;top:287px;width:56px;height:1px;background:#e0e0e0"></div>
<div class="t pp" style="left:211px;top:283px;color:#e8e8e8">По</div>
<div class="a" style="left:1px;top:299px;width:148px;height:21px;background:#5c5c5c"></div>
<div class="a" style="left:150px;top:299px;width:172px;height:21px;background:#5c5c5c"></div>
<div class="t pp" style="left:7px;top:305px;color:#e8e8e8">Масштаб типа линий</div>
<div class="t pp" style="left:152px;top:305px;color:#e8e8e8">1</div>
<div class="a" style="left:1px;top:321px;width:148px;height:21px;background:#5c5c5c"></div>
<div class="a" style="left:150px;top:321px;width:172px;height:21px;background:#5c5c5c"></div>
<div class="t pp" style="left:7px;top:327px;color:#e8e8e8">Вес линий</div>
<div class="a" style="left:155px;top:331px;width:56px;height:1px;background:#e0e0e0"></div>
<div class="t pp" style="left:211px;top:327px;color:#e8e8e8">По</div>
<div class="a" style="left:1px;top:343px;width:148px;height:21px;background:#5c5c5c"></div>
<div class="a" style="left:150px;top:343px;width:172px;height:21px;background:#5c5c5c"></div>
<div class="t pp" style="left:7px;top:349px;color:#e8e8e8">Прозрачность</div>
<div class="t pp" style="left:152px;top:349px;color:#e8e8e8">По слою</div>
<div class="a" style="left:1px;top:365px;width:148px;height:21px;background:#5c5c5c"></div>
<div class="a" style="left:150px;top:365px;width:172px;height:21px;background:#5c5c5c"></div>
<div class="t pp" style="left:7px;top:371px;color:#e8e8e8">Толщина</div>
<div class="t pp" style="left:152px;top:371px;color:#e8e8e8">0</div>
<div class="a" style="left:1px;top:386px;width:322px;height:20px;background:#4b4b4b"></div>
<div class="t pp" style="left:7px;top:392px;font-weight:bold;color:#ececec">3D-визуализация</div>
<div class="a" style="left:1px;top:407px;width:148px;height:21px;background:#5c5c5c"></div>
<div class="a" style="left:150px;top:407px;width:172px;height:21px;background:#5c5c5c"></div>
<div class="t pp" style="left:7px;top:413px;color:#e8e8e8">Материал</div>
<div class="t pp" style="left:152px;top:413px;color:#e8e8e8">По слою</div>
<div class="a" style="left:1px;top:428px;width:322px;height:20px;background:#4b4b4b"></div>
<div class="t pp" style="left:7px;top:434px;font-weight:bold;color:#ececec">Стили</div>
<div class="a" style="left:1px;top:449px;width:148px;height:21px;background:#5c5c5c"></div>
<div class="a" style="left:150px;top:449px;width:172px;height:21px;background:#5c5c5c"></div>
<div class="t pp" style="left:7px;top:455px;color:#e8e8e8">Стиль текста</div>
<div class="t pp" style="left:152px;top:455px;color:#e8e8e8">ГОСТ 2.304</div>
<div class="a" style="left:1px;top:471px;width:148px;height:21px;background:#5c5c5c"></div>
<div class="a" style="left:150px;top:471px;width:172px;height:21px;background:#5c5c5c"></div>
<div class="t pp" style="left:7px;top:477px;color:#e8e8e8">Размерный стиль</div>
<div class="t pp" style="left:152px;top:477px;color:#e8e8e8">СПДС</div>
<div class="a" style="left:1px;top:492px;width:322px;height:20px;background:#4b4b4b"></div>
<div class="t pp" style="left:7px;top:498px;font-weight:bold;color:#ececec">Стиль печати</div>
<div class="a" style="left:1px;top:513px;width:148px;height:21px;background:#5c5c5c"></div>
<div class="a" style="left:150px;top:513px;width:172px;height:21px;background:#5c5c5c"></div>
<div class="t pp" style="left:7px;top:519px;color:#e8e8e8">Стиль печати</div>
<div class="t pp" style="left:152px;top:519px;color:#a0a0a0">По цвету</div>
<div class="a" style="left:1px;top:535px;width:148px;height:21px;background:#5c5c5c"></div>
<div class="a" style="left:150px;top:535px;width:172px;height:21px;background:#5c5c5c"></div>
<div class="t pp" style="left:7px;top:541px;color:#e8e8e8">Таблица стилей печати</div>
<div class="t pp" style="left:152px;top:541px;color:#e8e8e8">Нет</div>
<div class="a" style="left:1px;top:557px;width:148px;height:21px;background:#5c5c5c"></div>
<div class="a" style="left:150px;top:557px;width:172px;height:21px;background:#5c5c5c"></div>
<div class="t pp" style="left:7px;top:563px;color:#e8e8e8">Пространство таблицы с...</div>
<div class="t pp" style="left:152px;top:563px;color:#a0a0a0">Модель</div>
<div class="a" style="left:1px;top:579px;width:148px;height:21px;background:#5c5c5c"></div>
<div class="a" style="left:150px;top:579px;width:172px;height:21px;background:#5c5c5c"></div>
<div class="t pp" style="left:7px;top:585px;color:#e8e8e8">Тип стилей печати</div>
<div class="t pp" style="left:152px;top:585px;color:#a0a0a0">Недоступно</div>
<div class="a" style="left:1px;top:600px;width:322px;height:20px;background:#4b4b4b"></div>
<div class="t pp" style="left:7px;top:606px;font-weight:bold;color:#ececec">Разное</div>
<div class="a" style="left:1px;top:621px;width:148px;height:21px;background:#5c5c5c"></div>
<div class="a" style="left:150px;top:621px;width:172px;height:21px;background:#5c5c5c"></div>
<div class="t pp" style="left:7px;top:627px;color:#e8e8e8">Знак ПСК Вкл</div>
<div class="t pp" style="left:152px;top:627px;color:#e8e8e8">Да</div>
<div class="a" style="left:1px;top:643px;width:148px;height:21px;background:#5c5c5c"></div>
<div class="a" style="left:150px;top:643px;width:172px;height:21px;background:#5c5c5c"></div>
<div class="t pp" style="left:7px;top:649px;color:#e8e8e8">Знак ПСК в начале коор...</div>
<div class="t pp" style="left:152px;top:649px;color:#e8e8e8">Да</div>
<div class="a" style="left:1px;top:665px;width:148px;height:21px;background:#5c5c5c"></div>
<div class="a" style="left:150px;top:665px;width:172px;height:21px;background:#5c5c5c"></div>
<div class="t pp" style="left:7px;top:671px;color:#e8e8e8">ПСК в каждом ВЭкране</div>
<div class="t pp" style="left:152px;top:671px;color:#e8e8e8">Да</div>
<div class="a" style="left:1px;top:687px;width:148px;height:21px;background:#5c5c5c"></div>
<div class="a" style="left:150px;top:687px;width:172px;height:21px;background:#5c5c5c"></div>
<div class="t pp" style="left:7px;top:693px;color:#e8e8e8">Имя ПСК</div>
<div class="t pp" style="left:152px;top:693px;color:#e8e8e8">Мировая СК</div>
<div class="a" style="left:1px;top:709px;width:148px;height:21px;background:#5c5c5c"></div>
<div class="a" style="left:150px;top:709px;width:172px;height:21px;background:#5c5c5c"></div>
<div class="t pp" style="left:7px;top:715px;color:#e8e8e8">Визуальный стиль</div>
<div class="t pp" style="left:152px;top:715px;color:#e8e8e8">Тонированный</div>
</div></div>
</div>
<!-- ===== DOC AREA ===== -->
<div class="a" style="left:323px;top:146px;width:5px;height:787px;background:#474747"></div>
<div class="a" style="left:328px;top:146px;width:1592px;height:21px;background:#4b4b4b;border-top:1px solid #5e5e5e;border-bottom:1px solid #858585"></div>
<div class="t rb" style="left:350px;top:152px;color:#c8c8c8;font-size:11.1px">Без имени0</div>
<div class="a" style="left:411px;top:149px;width:111px;height:15px;background:#737373"></div>
<div class="t rb" style="left:431px;top:152px;color:#f2f2f2;font-size:11.1px">1 этаж.dwg*</div>
<svg class="a" style="left:510px;top:152px" width="9" height="9"><path d="M0.5 0.5L8.5 8.5M8.5 0.5L0.5 8.5" stroke="#f0f0f0" stroke-width="1.5"/></svg>
<svg class="a" style="left:1902px;top:154px" width="12" height="6"><path d="M0 0h12L6 6z" fill="#e8e8e8"/></svg>
<div class="a" style="left:328px;top:167px;width:2px;height:743px;background:#6a6a6a"></div>
<!-- drawing content -->
<div class="a" style="left:330px;top:167px;width:1587px;height:743px;background:#2c2d30;overflow:hidden"><div class="a" style="left:-330px;top:-167px;width:1924px;height:1033px">
<div class="a" style="left:330px;top:207px;width:1587px;height:1px;background:#393a40;"></div>
<div class="a" style="left:724px;top:167px;width:1px;height:743px;background:#353640;"></div>
<div class="a" style="left:886px;top:167px;width:1px;height:43px;background:#b86a18;"></div>
<div class="a" style="left:887px;top:167px;width:490px;height:43px;background:#d9d9d9;"></div>
<div class="a" style="left:921px;top:167px;width:1px;height:43px;background:#ff74c6;"></div>
<div class="a" style="left:1377px;top:167px;width:96px;height:630px;background:#6f6f71;"></div>
<div class="a" style="left:1377px;top:207px;width:93px;height:1px;background:#66677a;"></div>
<div class="a" style="left:1377px;top:703px;width:93px;height:1px;background:#66677a;"></div>
<div class="a" style="left:1398px;top:653px;width:72px;height:10px;background:#d9d9d9;"></div>
<div class="a" style="left:1377px;top:795px;width:95px;height:2px;background:#ff74c6;"></div>
<div class="a" style="left:1472px;top:167px;width:2px;height:89px;background:#ff74c6;"></div><div class="a" style="left:1470px;top:256px;width:2px;height:541px;background:#ff74c6;"></div>
<div class="a" style="left:1377px;top:797px;width:97px;height:35px;background:#d9d9d9;"></div>
<div class="a" style="left:1377px;top:832px;width:93px;height:78px;background:#2a2b2e;"></div>
<div class="a" style="left:1469px;top:832px;width:1px;height:78px;background:#b86a18;"></div>
<div class="a" style="left:1474px;top:167px;width:443px;height:743px;background:#d9d9d9;"></div><div class="a" style="left:1472px;top:256px;width:2px;height:654px;background:#d9d9d9;"></div>
<div class="a" style="left:1508px;top:167px;width:409px;height:55px;background:#2c2d30;border-left:1px solid #b86a18;border-bottom:1px solid #b86a18"></div>
<div class="a" style="left:1509px;top:207px;width:408px;height:1px;background:#393a40;"></div>
<div class="a" style="left:1715px;top:167px;width:1px;height:54px;background:#393a40;"></div>
<div class="a" style="left:1504px;top:256px;width:106px;height:205px;background:#6f6f71;border:2px solid #ff74c6"></div>
<div class="a" style="left:1613px;top:256px;width:290px;height:205px;background:#6f6f71;border:2px solid #ff74c6"></div>
<div class="a" style="left:1910px;top:256px;width:20px;height:205px;background:#6f6f71;border:2px solid #ff74c6"></div>
<div class="a" style="left:1715px;top:258px;width:1px;height:201px;background:#68687a;"></div>
<div class="a" style="left:1504px;top:484px;width:252px;height:161px;background:#6f6f71;border:2px solid #ff74c6"></div>
<div class="a" style="left:1715px;top:486px;width:1px;height:157px;background:#68687a;"></div>
<div class="a" style="left:1765px;top:484px;width:42px;height:77px;background:#6f6f71;"></div>
<div class="a" style="left:1765px;top:565px;width:42px;height:80px;background:#6f6f71;"></div>
<div class="a" style="left:1817px;top:484px;width:113px;height:166px;background:#6f6f71;border:2px solid #ff74c6"></div>
<div class="a" style="left:1505px;top:654px;width:412px;height:256px;background:#6f6f71;"></div>
<div class="a" style="left:1715px;top:654px;width:1px;height:256px;background:#68687a;"></div>
<div class="a" style="left:1505px;top:703px;width:412px;height:1px;background:#68687a;"></div>
<div class="a" style="left:1504px;top:797px;width:306px;height:22px;background:#d9d9d9;border:1px solid #f6f6f6"></div>
<div class="a" style="left:1504px;top:819px;width:2px;height:91px;background:#ff74c6;"></div>
<div class="a" style="left:1806px;top:819px;width:3px;height:91px;background:#ebdde6;"></div>
<div class="a" style="left:1605px;top:339px;width:8px;height:8px;border-radius:4px;background:#808082;opacity:.35"></div>
<div class="a" style="left:1897px;top:341px;width:8px;height:8px;border-radius:4px;background:#808082;opacity:.35"></div>
<div class="a" style="left:1701px;top:651px;width:8px;height:8px;border-radius:4px;background:#808082;opacity:.35"></div>
<div class="a" style="left:1882px;top:648px;width:8px;height:8px;border-radius:4px;background:#808082;opacity:.35"></div>
<div class="a" style="left:1502px;top:716px;width:8px;height:8px;border-radius:4px;background:#808082;opacity:.35"></div>
<div class="a" style="left:1547px;top:793px;width:8px;height:8px;border-radius:4px;background:#808082;opacity:.35"></div>
<div class="a" style="left:1547px;top:814px;width:8px;height:8px;border-radius:4px;background:#808082;opacity:.35"></div>
</div></div>
<div class="a" style="left:1917px;top:146px;width:3px;height:787px;background:#6a6a6a;"></div>
<div class="a" style="left:1920px;top:210px;width:4px;height:823px;background:#2c3e52;"></div>
<!-- notches & viewcube -->
<div class="a" style="left:1736px;top:256px;width:30px;height:8px;background:#d9d9d9;border:2px solid #ff6ec7;border-top:0"></div>
<div class="a" style="left:1864px;top:256px;width:30px;height:8px;background:#d9d9d9;border:2px solid #ff6ec7;border-top:0"></div>
<svg class="a" style="left:1740px;top:175px" width="170" height="185" viewBox="1740 175 170 185">
 <circle cx="1824" cy="259.5" r="76" fill="none" stroke="#a8a8a8" stroke-width="0.9" opacity=".85"/>
 <circle cx="1824" cy="259.5" r="50.5" fill="none" stroke="#a8a8a8" stroke-width="0.9" opacity=".85"/>
 <path d="M1824 183.5V335.5M1748 259.5H1900" stroke="#a8a8a8" stroke-width="0.9" opacity=".85"/>
 <circle cx="1824" cy="259.5" r="5.5" fill="#a87858" stroke="#c89878" stroke-width="1"/>
 <rect x="1797" y="336" width="55" height="18" rx="2" fill="#6a6a6c"/>
</svg>
<div class="t" style="left:1797px;top:340px;width:55px;text-align:center;color:#c8c8c8;font-size:11px">Сверху</div>

<!-- view toolbar -->
<div class="a" style="left:337px;top:173px;width:28px;height:17px;background:#3d3e40;border-radius:3px"></div>
<div class="t rb" style="left:337px;top:175px;width:28px;text-align:center;color:#8a8a8a;font-size:13px">+</div>
<div class="a" style="left:367px;top:173px;width:57px;height:17px;background:#3d3e40;border-radius:3px"></div>
<div class="t rb" style="left:367px;top:176px;width:57px;text-align:center;color:#8a8a8a;font-size:10.9px">Сверху</div>
<div class="a" style="left:426px;top:173px;width:94px;height:17px;background:#3d3e40;border-radius:3px"></div>
<div class="t rb" style="left:426px;top:176px;width:94px;text-align:center;color:#8a8a8a;font-size:10.9px">Тонированный</div>
<div class="a" style="left:522px;top:173px;width:159px;height:17px;background:#3d3e40;border-radius:3px"></div>
<div class="t rb" style="left:522px;top:176px;width:159px;text-align:center;color:#8a8a8a;font-size:10.9px">--- нет связанных видов ---</div>

<!-- layout tabs -->
<div class="a" style="left:328px;top:910px;width:1592px;height:23px;background:#4b4b4b"></div>
<div class="a" style="left:330px;top:910px;width:1587px;height:2px;background:#7a7a7a"></div>
<div class="a" style="left:328px;top:930px;width:1592px;height:2px;background:#7a7a7a"></div>
<div class="a" style="left:328px;top:167px;width:2px;height:765px;background:#747474"></div>
<svg class="a" style="left:332px;top:913px" width="16" height="15" viewBox="0 0 16 15"><rect x="0.5" y="0.5" width="15" height="14" fill="#2a2a2a" stroke="#ddd"/><path d="M1 10.5h14" stroke="#ddd"/><rect x="1" y="4" width="14" height="3" fill="#6aa0e0"/><circle cx="3" cy="2.5" r=".9" fill="#ddd"/><circle cx="3" cy="8.5" r=".9" fill="#ddd"/><circle cx="3" cy="12.5" r=".9" fill="#ddd"/></svg>
<div class="a" style="left:367px;top:912px;width:55px;height:17px;background:#6c6c6c"></div>
<div class="t rb" style="left:367px;top:915px;width:55px;text-align:center;color:#f2f2f2">Модель</div>
<div class="t rb" style="left:431px;top:915px;color:#c0c0c0">A4</div>
<div class="t rb" style="left:458px;top:915px;color:#c0c0c0">A3</div>
<div class="t rb" style="left:485px;top:915px;color:#c0c0c0">A2</div>
<div class="t rb" style="left:512px;top:915px;color:#c0c0c0">A1</div>

<!-- command line -->
<div class="a" style="left:0;top:933px;width:1920px;height:6px;background:#474747"></div>
<div class="a" style="left:0;top:939px;width:1920px;height:69px;background:#5a5a5a"></div>
<div class="a" style="left:0;top:939px;width:18px;height:69px;background:#6a6a6a"></div>
<svg class="a" style="left:5px;top:944px" width="9" height="9"><path d="M0.5 0.5L8.5 8.5M8.5 0.5L0.5 8.5" stroke="#fff" stroke-width="1.4"/></svg>
<svg class="a" style="left:5px;top:963px" width="9" height="10"><path d="M2 1h5M2.5 1v4M6.5 1v4M1 5h7M4.5 5v5" stroke="#fff" stroke-width="1.3" fill="none"/></svg>
<div class="t" style="left:2px;top:1006px;transform:rotate(-90deg);transform-origin:0 0;color:#c0c0c0;font-size:12px">Кома</div>
<div class="a" style="left:18px;top:939px;width:1902px;height:51px;overflow:hidden">
 <div class="t" style="left:3px;top:-3px;font-family:'Liberation Mono',monospace;font-size:11.7px;color:#e0e0e0">E,ERASE,С,СТЕРЕТЬ - Удаление</div>
 <div class="t" style="left:3px;top:11px;font-family:'Liberation Mono',monospace;font-size:11.7px;color:#e0e0e0">1 найдено</div>
 <div class="t" style="left:3px;top:25px;font-family:'Liberation Mono',monospace;font-size:11.7px;color:#e0e0e0">CW_APP_SETTINGS - Настройки</div>
 <div class="t" style="left:3px;top:39px;font-family:'Liberation Mono',monospace;font-size:11.7px;color:#e0e0e0">CW_PROJECT - Менеджер проекта</div>
</div>
<div class="a" style="left:18px;top:990px;width:1902px;height:2px;background:#505050"></div>
<div class="a" style="left:18px;top:992px;width:1902px;height:16px;background:#5f5f5f;border-top:1px solid #676767"></div>
<div class="t" style="left:20px;top:995px;font-family:'Liberation Mono',monospace;font-size:11.7px;color:#e0e0e0">Команда:</div>

<!-- status bar -->
<div class="a" style="left:0;top:1008px;width:1920px;height:25px;background:#4a4a4a"></div>
<div class="t" style="left:3px;top:1016px;color:#f0f0f0;font-size:10.8px">5465993.3728,6289509.8009,0.0000</div>
<div class="a" style="left:190px;top:1011px;width:1px;height:19px;background:#3c3c3c"></div>
<div class="t sbt" style="left:190px;top:1016px;width:42px;text-align:center;color:#f4f4f4">ШАГ</div>
<div class="a" style="left:232px;top:1010px;width:51px;height:20px;background:#4f6a8c;border:1px solid #4a90e2"></div>
<div class="t sbt" style="left:232px;top:1016px;width:50px;text-align:center;color:#f4f4f4">СЕТКА</div>
<div class="a" style="left:282px;top:1010px;width:80px;height:20px;background:#4f6a8c;border:1px solid #4a90e2"></div>
<div class="t sbt" style="left:282px;top:1016px;width:79px;text-align:center;color:#f4f4f4">оПРИВЯЗКА</div>
<div class="a" style="left:361px;top:1010px;width:97px;height:20px;background:#4f6a8c;border:1px solid #4a90e2"></div>
<div class="t sbt" style="left:361px;top:1016px;width:96px;text-align:center;color:#f4f4f4">3D оПРИВЯЗКА</div>
<div class="a" style="left:457px;top:1010px;width:86px;height:20px;background:#4f6a8c;border:1px solid #4a90e2"></div>
<div class="t sbt" style="left:457px;top:1016px;width:85px;text-align:center;color:#f4f4f4">ОТС-ОБЪЕКТ</div>
<div class="t sbt" style="left:542px;top:1016px;width:81px;text-align:center;color:#f4f4f4">ОТС-ПОЛЯР</div>
<div class="a" style="left:623px;top:1010px;width:49px;height:20px;background:#4f6a8c;border:1px solid #4a90e2"></div>
<div class="t sbt" style="left:623px;top:1016px;width:48px;text-align:center;color:#f4f4f4">ОРТО</div>
<div class="a" style="left:671px;top:1010px;width:77px;height:20px;background:#4f6a8c;border:1px solid #4a90e2"></div>
<div class="t sbt" style="left:671px;top:1016px;width:76px;text-align:center;color:#f4f4f4">ДИН-ВВОД</div>
<div class="t sbt" style="left:747px;top:1016px;width:40px;text-align:center;color:#f4f4f4">ИЗО</div>
<div class="a" style="left:792px;top:1010px;width:37px;height:20px;background:#4f6a8c;border:1px solid #4a90e2"></div>
<div class="t sbt" style="left:792px;top:1016px;width:36px;text-align:center;color:#f4f4f4">ВЕС</div>
<div class="a" style="left:828px;top:1010px;width:85px;height:20px;background:#4f6a8c;border:1px solid #4a90e2"></div>
<div class="t sbt" style="left:828px;top:1016px;width:84px;text-align:center;color:#f4f4f4">ШТРИХОВКА</div>
<div class="a" style="left:788px;top:1011px;width:1px;height:19px;background:#3c3c3c"></div>
<div class="t sbt" style="left:1856px;top:1016px;color:#f0f0f0">M1:200</div>
<div class="a" style="left:0;top:1032px;width:1924px;height:1px;background:#141a26"></div>
<!-- ===== DIALOG ===== -->
<div class="a" id="dlg" style="left:225px;top:200px;width:1173px;height:683px;background:#f0f0f0;border-radius:8px;box-shadow:0 6px 28px rgba(0,0,0,.5);overflow:hidden;color:#000;font-size:12px">
 <!-- title -->
 <div class="a" style="left:0;top:0;width:1173px;height:30px;background:#f3f3f3"></div>
 <svg class="a" style="left:7px;top:5px" width="20" height="19" viewBox="0 0 20 19">
 <defs><linearGradient id="mon" x1="0" y1="0" x2="0" y2="1"><stop offset="0" stop-color="#b0f4ff"/><stop offset="1" stop-color="#2aa8f8"/></linearGradient></defs>
 <path d="M9.5 6v4M5 10h9" stroke="#111" stroke-width="1.3"/>
 <rect x="7" y="1" width="5" height="5" fill="url(#mon)" stroke="#6a7ae0" stroke-width=".8"/>
 <rect x="2" y="7" width="5" height="5" fill="url(#mon)" stroke="#6a7ae0" stroke-width=".8"/>
 <rect x="11" y="7" width="5" height="5" fill="url(#mon)" stroke="#6a7ae0" stroke-width=".8"/>
 <ellipse cx="4.5" cy="14.5" rx="3.5" ry="2" fill="#a8a8d0" stroke="#6a6a9a" stroke-width=".6"/>
 <ellipse cx="13.5" cy="14.5" rx="3.5" ry="2" fill="#a8a8d0" stroke="#6a6a9a" stroke-width=".6"/>
 <circle cx="9.5" cy="10" r="1.6" fill="#e0a010"/>
</svg>
 <div class="t" style="left:29px;top:9px;font-size:12px;color:#000">Менеджер проекта</div>
 <div class="a" style="left:1054px;top:14px;width:10px;height:1px;background:#111"></div>
 <div class="a" style="left:1099px;top:9px;width:10px;height:10px;border:1px solid #111;border-radius:1px"></div>
 <svg class="a" style="left:1145px;top:9px" width="10" height="10" viewBox="0 0 10 10"><path d="M0 0L10 10M10 0L0 10" stroke="#111" stroke-width="1"/></svg>
 <!-- menu -->
 <div class="a" style="left:0;top:30px;width:1173px;height:28px;background:#f5f5f5"></div>
 <div class="t" style="left:5px;top:36px">Файл</div>
 <div class="t" style="left:44px;top:36px">Вид</div>
 <div class="t" style="left:75px;top:36px">Сервис</div>
 <div class="t" style="left:126px;top:36px">Справка</div>
 <!-- toolbar -->
 <div class="a" style="left:0;top:58px;width:1173px;height:25px;background:#f9f9f9"></div>
 
 <svg class="a" style="left:0;top:56px" width="270" height="28" viewBox="0 56 270 28">
<rect x="3" y="58" width="105" height="23" rx="2" fill="#f3f3f3"/><rect x="110" y="58" width="80" height="23" rx="2" fill="#f3f3f3"/><rect x="191" y="58" width="33" height="23" rx="2" fill="#f3f3f3"/><rect x="226" y="58" width="33" height="23" rx="2" fill="#f3f3f3"/>
<rect x="6" y="62" width="2" height="2" fill="#b8b8b8"/><rect x="6" y="66" width="2" height="2" fill="#b8b8b8"/><rect x="6" y="70" width="2" height="2" fill="#b8b8b8"/><rect x="6" y="74" width="2" height="2" fill="#b8b8b8"/><rect x="16" y="62" width="13" height="15" rx="1" fill="#5a9ae0" stroke="#2a6ab8" stroke-width=".8"/><rect x="19" y="64" width="7" height="3" fill="#fff"/><path d="M25 70l1.5 3 3-1-2 2.5 2 2.5-3-1-1.5 3-1.5-3-3 1 2-2.5-2-2.5 3 1z" fill="#f8c020"/><path d="M38 66h5l1 1h6v10H38z" fill="#c8dcf0" stroke="#4a8ad0" stroke-width=".8"/><path d="M41 70h13l-3 7H38z" fill="#6aaae8" stroke="#2a6ab8" stroke-width=".8"/><path d="M47 65q3-3 6 0" stroke="#3a7ac8" fill="none" stroke-width="1.2"/><rect x="62" y="62" width="13" height="15" rx="1" fill="#5a9ae0" stroke="#2a6ab8" stroke-width=".8"/><rect x="65" y="64" width="7" height="3" fill="#fff"/><rect x="68" y="70" width="8" height="8" fill="#e03030"/><path d="M69.5 71.5l5 5M74.5 71.5l-5 5" stroke="#fff" stroke-width="1.3"/><rect x="84" y="62" width="16" height="15" rx="1.5" fill="#5aa0e8" stroke="#2a6ab8" stroke-width=".8"/><rect x="87" y="64" width="10" height="5" fill="#fff"/><path d="M88 65.5h8M88 67.5h8" stroke="#8ab" stroke-width=".6"/><rect x="88" y="72" width="8" height="5" fill="#ddd"/>
<rect x="106" y="59" width="1" height="21" fill="#c8c8c8"/>
<rect x="110" y="62" width="2" height="2" fill="#b8b8b8"/><rect x="110" y="66" width="2" height="2" fill="#b8b8b8"/><rect x="110" y="70" width="2" height="2" fill="#b8b8b8"/><rect x="110" y="74" width="2" height="2" fill="#b8b8b8"/><rect x="119" y="68" width="13" height="10" fill="#e8f0fa" stroke="#4a7ab8" stroke-width=".8"/><path d="M121 72h5M121 74h7M121 76h6" stroke="#4a7ab8" stroke-width=".7"/><path d="M123 69l6-6 6 1-2 5-6 2z" fill="#d8b048" stroke="#987018" stroke-width=".6"/><path d="M133 63l2 4v-4z" fill="#3a9a3a"/><rect x="142" y="63" width="15" height="12" fill="#fff" stroke="#2a70c0" stroke-width="1.4"/><path d="M144 66h3M144 68h3M144 70h3" stroke="#8aa0c0" stroke-width=".8"/><circle cx="154" cy="74" r="3.5" fill="#6a7a8a"/><circle cx="154" cy="74" r="1.4" fill="#fff"/><path d="M164 72h12v5H164z" fill="#f0dca8" stroke="#8a5a2a" stroke-width=".8"/><path d="M164 74.5h12" stroke="#8a5a2a" stroke-width=".8"/><rect x="167" y="62" width="13" height="9" rx="2" fill="#5a9ad8" stroke="#2a6ab0" stroke-width=".8"/><path d="M171 64.5h5" stroke="#fff" stroke-width="1.2"/><path d="M166 69.5h14" stroke="#2a6ab0"/><rect x="170" y="70" width="1.6" height="4" fill="#e02020"/>
<rect x="187" y="59" width="1" height="21" fill="#c8c8c8"/>
<rect x="191" y="62" width="2" height="2" fill="#b8b8b8"/><rect x="191" y="66" width="2" height="2" fill="#b8b8b8"/><rect x="191" y="70" width="2" height="2" fill="#b8b8b8"/><rect x="191" y="74" width="2" height="2" fill="#b8b8b8"/><path d="M200 62h15v11l-4 4H200z" fill="#5aa8e8"/><path d="M204 66h7v7H204z" fill="none" stroke="#fff" stroke-width="1"/><path d="M207.5 64v3M207.5 72v3M202 69.5h3M210 69.5h3" stroke="#fff" stroke-width="1"/><rect x="206.5" y="68.5" width="2" height="2" fill="#fff"/>
<rect x="222" y="59" width="1" height="21" fill="#c8c8c8"/>
<rect x="226" y="62" width="2" height="2" fill="#b8b8b8"/><rect x="226" y="66" width="2" height="2" fill="#b8b8b8"/><rect x="226" y="70" width="2" height="2" fill="#b8b8b8"/><rect x="226" y="74" width="2" height="2" fill="#b8b8b8"/><ellipse cx="243" cy="65" rx="6" ry="2.5" fill="#d8d8d8" stroke="#999" stroke-width=".6"/><path d="M237 65v10a6 2.5 0 0 0 12 0V65" fill="#c8c8c8" stroke="#999" stroke-width=".6"/><path d="M237 69a6 2.5 0 0 0 12 0M237 72a6 2.5 0 0 0 12 0" fill="none" stroke="#999" stroke-width=".6"/><path d="M248 70v8M244 74h8" stroke="#3ab83a" stroke-width="2.6"/>
<rect x="257" y="59" width="1" height="21" fill="#c8c8c8"/>
</svg>

 <!-- LEFT PANEL -->
 <div class="a" style="left:0;top:83px;width:263px;height:3px;background:#9cbcf5"></div>
 <div class="a" style="left:0;top:86px;width:263px;height:19px;background:linear-gradient(#e6eefb,#9dbaf0)"></div>
 <div class="a" style="left:0;top:105px;width:263px;height:5px;background:#9cbcf5"></div>
 <div class="t" style="left:5px;top:90px;font-size:12px;color:#000">Проводник</div>
 <div class="a" style="left:232px;top:90px;width:31px;height:13px;background:#8fb0ea"></div>
 <svg class="a" style="left:233px;top:91px" width="30" height="11" viewBox="0 0 30 11">
  <path d="M2 1h7M3 1v5M8 1v5M1 6h9M5.5 6v5" stroke="#000" stroke-width="1.6" fill="none"/>
  <path d="M18 1.5L26 9.5M26 1.5L18 9.5" stroke="#111" stroke-width="1.1"/>
 </svg>
 <div class="a" style="left:0;top:110px;width:263px;height:26px;background:#f5f5f5"></div>
 
 <svg class="a" style="left:0;top:110px" width="100" height="26" viewBox="0 110 100 26">
<rect x="3" y="111" width="86" height="23" rx="2" fill="#f0f0f0"/>
<rect x="6" y="114" width="2" height="2" fill="#b8b8b8"/><rect x="6" y="118" width="2" height="2" fill="#b8b8b8"/><rect x="6" y="122" width="2" height="2" fill="#b8b8b8"/><rect x="6" y="126" width="2" height="2" fill="#b8b8b8"/>
<rect x="12" y="112" width="22" height="21" fill="#f8f8f8" stroke="#1a7ae0" stroke-width="1.2"/>
<rect x="15" y="114" width="6" height="6" fill="#fff" stroke="#3a8ab0" stroke-width=".8"/><path d="M16.5 117h3M18 115.5v3" stroke="#000"/>
<rect x="15" y="123" width="6" height="6" fill="#fff" stroke="#3a8ab0" stroke-width=".8"/><path d="M16.5 126h3M18 124.5v3" stroke="#000"/>
<path d="M23 115h4M23 117h8M23 119h8M23 124h4M23 126h8M23 129h8" stroke="#3a9a6a" stroke-width=".8"/>
<rect x="38" y="114" width="1" height="18" fill="#c8c8c8"/>
<path d="M51 114l-6 6h3.5v6h5v-6H57z" fill="#c0c0c0"/>
<path d="M74 128l-6-6h3.5v-6h5v6H80z" fill="#c0c0c0"/>
<rect x="89" y="112" width="1" height="22" fill="#c8c8c8"/>
</svg>
 <div class="a" style="left:1px;top:136px;width:262px;height:525px;background:#fff;border:1px solid #a0a0a0;border-bottom:0"></div>
 <div class="a" style="left:2px;top:137px;width:259px;height:505px;overflow:hidden;font-size:11.7px">
<svg class="a" style="left:6px;top:6px" width="6" height="6"><path d="M6 0V6H0Z" fill="#2c2c64"/></svg>
<div class="a" style="left:25px;top:2px;width:18px;height:16px"><svg width="18" height="16" viewBox="0 0 18 16"><path d="M1 10h11v5H1z" fill="#f3e2b0" stroke="#8a5a2a" stroke-width="1"/><path d="M1 12.5h11" stroke="#8a5a2a"/><rect x="4" y="1" width="12" height="9" rx="1.5" fill="#5a9ad8" stroke="#2a6ab0"/><path d="M7 3.5h6" stroke="#fff" stroke-width="1.2"/><path d="M3 7.5h13" stroke="#2a6ab0"/><rect x="6" y="8" width="1.6" height="4" fill="#e02020"/></svg></div>
<div class="t" style="left:48.6px;top:5px;color:#000">Рабочая область: 'СКС' (1 projects)</div>
<svg class="a" style="left:25px;top:24px" width="6" height="6"><path d="M6 0V6H0Z" fill="#2c2c64"/></svg>
<div class="a" style="left:44px;top:20px;width:15px;height:16px"><svg width="15" height="16" viewBox="0 0 15 16"><rect x="0.5" y="0.5" width="13.5" height="15" rx="1" fill="#5aa0e0" stroke="#2a70b8"/><path d="M3 1v14" stroke="#2a70b8"/><path d="M6 4h6M6 6.5h6" stroke="#fff" stroke-width="1.2"/></svg></div>
<div class="t" style="left:67.6px;top:23px;color:#000">СКС</div>
<svg class="a" style="left:44px;top:42px" width="6" height="6"><path d="M6 0V6H0Z" fill="#2c2c64"/></svg>
<div class="a" style="left:63px;top:39px;width:16px;height:14px"><svg width="16" height="14" viewBox="0 0 16 14"><path d="M2.5 6V3.5l2-2h3l1 1.5h4.5v3" fill="#f4f4d0" stroke="#888" stroke-width="1"/><path d="M3 4h5" stroke="#e8e830" stroke-width="1.6"/><path d="M1 6.5h11l2.5 5.5H3.5z" fill="#f0f040" stroke="#999" stroke-width="1"/><path d="M3 8h8M4 10h8" stroke="#fff" stroke-width=".7" stroke-dasharray="1 1"/><path d="M14.5 4.5v8.5H4" stroke="#000" stroke-width="1.8" fill="none"/></svg></div>
<div class="t" style="left:86.6px;top:41px;color:#000">Чертежи</div>
<div class="a" style="left:77px;top:55px;width:65px;height:17px;background:#d9d9d9;border-radius:2px"></div>
<div class="a" style="left:82px;top:58px;width:15px;height:13px"><svg width="15" height="13" viewBox="0 0 15 13"><path d="M3.5 0.5h10.5v12H0.5V3.5z" fill="#eef2f6" stroke="#1a5ab8" stroke-width="1.2"/><path d="M0.5 3.5h3v-3" fill="none" stroke="#1a5ab8" stroke-width="1"/><path d="M6 12.5v-3h8" fill="none" stroke="#1a5ab8" stroke-width="1.2"/><rect x="7" y="10" width="6.5" height="2" fill="#a8d8d8"/></svg></div>
<div class="t" style="left:105.6px;top:59px;color:#000">1 этаж</div>
<svg class="a" style="left:44px;top:78px" width="6" height="6"><path d="M6 0V6H0Z" fill="#2c2c64"/></svg>
<div class="a" style="left:63px;top:75px;width:16px;height:14px"><svg width="16" height="14" viewBox="0 0 16 14"><path d="M2.5 6V3.5l2-2h3l1 1.5h4.5v3" fill="#f4f4d0" stroke="#888" stroke-width="1"/><path d="M3 4h5" stroke="#e8e830" stroke-width="1.6"/><path d="M1 6.5h11l2.5 5.5H3.5z" fill="#f0f040" stroke="#999" stroke-width="1"/><path d="M3 8h8M4 10h8" stroke="#fff" stroke-width=".7" stroke-dasharray="1 1"/><path d="M14.5 4.5v8.5H4" stroke="#000" stroke-width="1.8" fill="none"/></svg></div>
<div class="t" style="left:86.6px;top:77px;color:#000">Таблицы</div>
<div class="a" style="left:82px;top:92px;width:14px;height:16px"><svg width="14" height="16" viewBox="0 0 14 16"><path d="M0.5 0.5h9l4 4v11H0.5z" fill="#fff" stroke="#1a5ab8"/><path d="M9.5 0.5v4h4" fill="none" stroke="#1a5ab8"/><rect x="2" y="6" width="10.5" height="8.5" fill="#fff" stroke="#1a5ab8"/><path d="M2 8.5h10.5M2 11h10.5M5.5 6v8.5M9 6v8.5" stroke="#1a5ab8"/></svg></div>
<div class="t" style="left:105.6px;top:95px;color:#000">Экспликация помещений</div>
<div class="a" style="left:82px;top:110px;width:14px;height:16px"><svg width="14" height="16" viewBox="0 0 14 16"><path d="M0.5 0.5h9l4 4v11H0.5z" fill="#fff" stroke="#1a5ab8"/><path d="M9.5 0.5v4h4" fill="none" stroke="#1a5ab8"/><rect x="2" y="6" width="10.5" height="8.5" fill="#fff" stroke="#1a5ab8"/><path d="M2 8.5h10.5M2 11h10.5M5.5 6v8.5M9 6v8.5" stroke="#1a5ab8"/></svg></div>
<div class="t" style="left:105.6px;top:113px;color:#000">Условные обозначения</div>
<div class="a" style="left:82px;top:128px;width:14px;height:16px"><svg width="14" height="16" viewBox="0 0 14 16"><path d="M0.5 0.5h9l4 4v11H0.5z" fill="#fff" stroke="#1a5ab8"/><path d="M9.5 0.5v4h4" fill="none" stroke="#1a5ab8"/><rect x="2" y="6" width="10.5" height="8.5" fill="#fff" stroke="#1a5ab8"/><path d="M2 8.5h10.5M2 11h10.5M5.5 6v8.5M9 6v8.5" stroke="#1a5ab8"/></svg></div>
<div class="t" style="left:105.6px;top:131px;color:#000">Таблица прокладки кабелей</div>
<div class="a" style="left:82px;top:146px;width:14px;height:16px"><svg width="14" height="16" viewBox="0 0 14 16"><path d="M0.5 0.5h9l4 4v11H0.5z" fill="#fff" stroke="#1a5ab8"/><path d="M9.5 0.5v4h4" fill="none" stroke="#1a5ab8"/><rect x="2" y="6" width="10.5" height="8.5" fill="#fff" stroke="#1a5ab8"/><path d="M2 8.5h10.5M2 11h10.5M5.5 6v8.5M9 6v8.5" stroke="#1a5ab8"/></svg></div>
<div class="t" style="left:105.6px;top:149px;color:#000">Таблица прокладки кабелей</div>
<div class="a" style="left:82px;top:164px;width:14px;height:16px"><svg width="14" height="16" viewBox="0 0 14 16"><path d="M0.5 0.5h9l4 4v11H0.5z" fill="#fff" stroke="#1a5ab8"/><path d="M9.5 0.5v4h4" fill="none" stroke="#1a5ab8"/><rect x="2" y="6" width="10.5" height="8.5" fill="#fff" stroke="#1a5ab8"/><path d="M2 8.5h10.5M2 11h10.5M5.5 6v8.5M9 6v8.5" stroke="#1a5ab8"/></svg></div>
<div class="t" style="left:105.6px;top:167px;color:#000">Таблица прокладки кабелей</div>
<svg class="a" style="left:44px;top:186px" width="6" height="6"><path d="M6 0V6H0Z" fill="#2c2c64"/></svg>
<div class="a" style="left:63px;top:183px;width:16px;height:14px"><svg width="16" height="14" viewBox="0 0 16 14"><path d="M2.5 6V3.5l2-2h3l1 1.5h4.5v3" fill="#f4f4d0" stroke="#888" stroke-width="1"/><path d="M3 4h5" stroke="#e8e830" stroke-width="1.6"/><path d="M1 6.5h11l2.5 5.5H3.5z" fill="#f0f040" stroke="#999" stroke-width="1"/><path d="M3 8h8M4 10h8" stroke="#fff" stroke-width=".7" stroke-dasharray="1 1"/><path d="M14.5 4.5v8.5H4" stroke="#000" stroke-width="1.8" fill="none"/></svg></div>
<div class="t" style="left:86.6px;top:185px;color:#000">Документация</div>
<div class="a" style="left:82px;top:200px;width:14px;height:16px"><svg width="14" height="16" viewBox="0 0 14 16"><path d="M0.5 0.5h9l4 4v11H0.5z" fill="#fff" stroke="#1a5ab8"/><path d="M9.5 0.5v4h4" fill="none" stroke="#1a5ab8"/><path d="M10 5H3.5l3.5 4-3.5 4H10" fill="none" stroke="#000" stroke-width="1.3"/></svg></div>
<div class="t" style="left:105.6px;top:203px;color:#000">Спецификация оборудования</div>
<div class="a" style="left:82px;top:218px;width:14px;height:16px"><svg width="14" height="16" viewBox="0 0 14 16"><path d="M0.5 0.5h9l4 4v11H0.5z" fill="#fff" stroke="#1a5ab8"/><path d="M9.5 0.5v4h4" fill="none" stroke="#1a5ab8"/><path d="M3 6h8M3 8.5h8M3 11h8" stroke="#1a5ab8" stroke-width="1.1"/></svg></div>
<div class="t" style="left:105.6px;top:221px;color:#000">Ведомость чертежей</div>
<div class="a" style="left:82px;top:236px;width:14px;height:16px"><svg width="14" height="16" viewBox="0 0 14 16"><path d="M0.5 0.5h9l4 4v11H0.5z" fill="#fff" stroke="#1a5ab8"/><path d="M9.5 0.5v4h4" fill="none" stroke="#1a5ab8"/><path d="M3 6h8M3 8.5h8M3 11h8" stroke="#1a5ab8" stroke-width="1.1"/></svg></div>
<div class="t" style="left:105.6px;top:239px;color:#000">Ведомость объемов работ</div>
<div class="a" style="left:82px;top:254px;width:14px;height:16px"><svg width="14" height="16" viewBox="0 0 14 16"><path d="M0.5 0.5h9l4 4v11H0.5z" fill="#fff" stroke="#1a5ab8"/><path d="M9.5 0.5v4h4" fill="none" stroke="#1a5ab8"/><path d="M3 6h8M3 8.5h8M3 11h8" stroke="#1a5ab8" stroke-width="1.1"/></svg></div>
<div class="t" style="left:105.6px;top:257px;color:#000">Ведомость документов</div>
<div class="a" style="left:82px;top:272px;width:14px;height:16px"><svg width="14" height="16" viewBox="0 0 14 16"><path d="M0.5 0.5h9l4 4v11H0.5z" fill="#fff" stroke="#1a5ab8"/><path d="M9.5 0.5v4h4" fill="none" stroke="#1a5ab8"/><path d="M3 6h8M3 8.5h8M3 11h8" stroke="#1a5ab8" stroke-width="1.1"/></svg></div>
<div class="t" style="left:105.6px;top:275px;color:#000">Рабочие места</div>
<div class="a" style="left:82px;top:290px;width:14px;height:16px"><svg width="14" height="16" viewBox="0 0 14 16"><path d="M0.5 0.5h9l4 4v11H0.5z" fill="#fff" stroke="#1a5ab8"/><path d="M9.5 0.5v4h4" fill="none" stroke="#1a5ab8"/><path d="M4 3v4h3v6h4" fill="none" stroke="#000" stroke-width="1.4"/><rect x="3" y="2.5" width="2" height="2" fill="#000"/></svg></div>
<div class="t" style="left:105.6px;top:293px;color:#000">Кабельный журнал (ЛВС)</div>
<div class="a" style="left:82px;top:308px;width:14px;height:16px"><svg width="14" height="16" viewBox="0 0 14 16"><path d="M0.5 0.5h9l4 4v11H0.5z" fill="#fff" stroke="#1a5ab8"/><path d="M9.5 0.5v4h4" fill="none" stroke="#1a5ab8"/><path d="M4 3v4h3v6h4" fill="none" stroke="#000" stroke-width="1.4"/><rect x="3" y="2.5" width="2" height="2" fill="#000"/></svg></div>
<div class="t" style="left:105.6px;top:311px;color:#000">Кабельный журнал (Магистраль)</div>
<div class="a" style="left:82px;top:326px;width:14px;height:16px"><svg width="14" height="16" viewBox="0 0 14 16"><path d="M0.5 0.5h9l4 4v11H0.5z" fill="#fff" stroke="#1a5ab8"/><path d="M9.5 0.5v4h4" fill="none" stroke="#1a5ab8"/><path d="M4 3v4h3v6h4" fill="none" stroke="#000" stroke-width="1.4"/><rect x="3" y="2.5" width="2" height="2" fill="#000"/></svg></div>
<div class="t" style="left:105.6px;top:329px;color:#000">Кабельный журнал (Телефония)</div>
<div class="a" style="left:82px;top:344px;width:14px;height:16px"><svg width="14" height="16" viewBox="0 0 14 16"><path d="M0.5 0.5h9l4 4v11H0.5z" fill="#fff" stroke="#1a5ab8"/><path d="M9.5 0.5v4h4" fill="none" stroke="#1a5ab8"/><path d="M3 6h8M3 8.5h8M3 11h8" stroke="#1a5ab8" stroke-width="1.1"/></svg></div>
<div class="t" style="left:105.6px;top:347px;color:#000">Структурная схема</div>
<svg class="a" style="left:44px;top:366px" width="6" height="6"><path d="M6 0V6H0Z" fill="#2c2c64"/></svg>
<div class="a" style="left:63px;top:363px;width:16px;height:14px"><svg width="16" height="14" viewBox="0 0 16 14"><path d="M2.5 6V3.5l2-2h3l1 1.5h4.5v3" fill="#f4f4d0" stroke="#888" stroke-width="1"/><path d="M3 4h5" stroke="#e8e830" stroke-width="1.6"/><path d="M1 6.5h11l2.5 5.5H3.5z" fill="#f0f040" stroke="#999" stroke-width="1"/><path d="M3 8h8M4 10h8" stroke="#fff" stroke-width=".7" stroke-dasharray="1 1"/><path d="M14.5 4.5v8.5H4" stroke="#000" stroke-width="1.8" fill="none"/></svg></div>
<div class="t" style="left:86.6px;top:365px;color:#000">3D Модель</div>
<div class="a" style="left:82px;top:380px;width:14px;height:16px"><svg width="14" height="16" viewBox="0 0 14 16"><path d="M0.5 0.5h8l4 4v11H0.5z" fill="#fff" stroke="#1a5ab8"/><path d="M1 7h7v8.5H1z" fill="#3a7ad0"/><path d="M5 5h8v11H5z" fill="#7ab8f0"/></svg></div>
<div class="t" style="left:105.6px;top:383px;color:#000">3D Модель</div>
</div>
 <!-- scrollbar -->
 <div class="a" style="left:2px;top:642px;width:260px;height:17px;background:#f0f0f0"></div>
 <div class="a" style="left:2px;top:642px;width:17px;height:17px;background:#f0f0f0;border-right:1px solid #9a9a9a;border-bottom:1px solid #9a9a9a"></div>
 <svg class="a" style="left:7px;top:646px" width="6" height="9"><path d="M5 0L0 4.5L5 9Z" fill="#000"/></svg>
 <div class="a" style="left:20px;top:642px;width:143px;height:17px;background:#f0f0f0;border-left:1px solid #ffffff;border-right:1px solid #9a9a9a;border-bottom:1px solid #9a9a9a"></div>
 <div class="a" style="left:245px;top:642px;width:17px;height:17px;background:#f0f0f0;border-right:1px solid #9a9a9a;border-bottom:1px solid #9a9a9a"></div>
 <svg class="a" style="left:251px;top:646px" width="6" height="9"><path d="M0 0L5 4.5L0 9Z" fill="#000"/></svg>
 <div class="a" style="left:1px;top:659px;width:262px;height:2px;background:#dcdcdc"></div>

 <!-- CENTER -->
 <div class="a" style="left:267px;top:83px;width:678px;height:1px;background:#808080"></div>
 <div class="a" style="left:267px;top:84px;width:678px;height:24px;background:#f8f8f8;border-top:1px solid #fff"></div>
 <div class="a" style="left:272px;top:85px;width:50px;height:23px;background:#f0f0f0"></div>
 <div class="a" style="left:322px;top:85px;width:1px;height:23px;background:#555"></div>
 <div class="t" style="left:279px;top:92px;font-weight:bold;font-size:12px">1 этаж</div>
 <svg class="a" style="left:905px;top:92px" width="36" height="11" viewBox="0 0 36 11">
  <path d="M6.5 1L1.5 5.5L6.5 10Z" fill="none" stroke="#707070" stroke-width="1.1"/>
  <path d="M14.5 1L19.5 5.5L14.5 10Z" fill="none" stroke="#707070" stroke-width="1.1"/>
  <path d="M27 2L34 9M34 2L27 9" stroke="#707070" stroke-width="1.6"/>
 </svg>
 <div class="a" style="left:267px;top:113px;width:679px;height:548px;background:#fff;border:1px solid #8a9099;border-bottom:1px solid #8a9099"></div>

 <!-- RIGHT PANEL -->
 <div class="a" style="left:949px;top:83px;width:224px;height:3px;background:#9cbcf5"></div>
 <div class="a" style="left:949px;top:86px;width:224px;height:19px;background:linear-gradient(#fbe4c6,#f8c35a)"></div>
 <div class="a" style="left:949px;top:105px;width:224px;height:5px;background:#9cbcf5"></div>
 <div class="t" style="left:954px;top:90px;font-size:12px;color:#000">Свойства</div>
 <div class="a" style="left:1142px;top:90px;width:29px;height:13px;background:#f5b94a"></div>
 <svg class="a" style="left:1143px;top:91px" width="28" height="11" viewBox="0 0 28 11">
  <path d="M2 1h6M3 1v5M7 1v5M1 6h8M5 6v5" stroke="#000" stroke-width="1.5" fill="none"/>
  <path d="M16 2L23 9M23 2L16 9" stroke="#111" stroke-width="1.1"/>
 </svg>
 <div class="a" style="left:949px;top:110px;width:224px;height:507px;background:#fff;border-left:1px solid #a0a0a0;border-bottom:1px solid #a0a0a0;border-top:1px solid #a8a8a8"></div>
 <div class="a" style="left:950px;top:110px;width:223px;height:506px;overflow:hidden">
<div class="a" style="left:0;top:1px;width:223px;height:17px;background:#e1e1e1"></div>
<svg class="a" style="left:4px;top:6px" width="6" height="6"><path d="M6 0V6H0Z" fill="#2c2c64"/></svg>
<div class="t" style="left:18px;top:4.5px;font-weight:bold;color:#000">Свойства плана</div>
<div class="a" style="left:11px;top:18px;width:161px;height:22px;background:#fff;border-bottom:1px solid #f0f0f0"></div>
<div class="a" style="left:172px;top:18px;width:1px;height:22px;background:#f0f0f0"></div>
<div class="a" style="left:173px;top:18px;width:50px;height:22px;background:#fff;border-bottom:1px solid #f0f0f0"></div>
<div class="t" style="left:19px;top:24px;color:#000">Наименование документа</div>
<div class="a" style="left:173px;top:18px;width:50px;height:22px;overflow:hidden"><div class="t" style="left:6px;top:6px;color:#000">1 этаж</div></div>
<div class="a" style="left:11px;top:40px;width:161px;height:23px;background:#fff;border-bottom:1px solid #f0f0f0"></div>
<div class="a" style="left:172px;top:40px;width:1px;height:23px;background:#f0f0f0"></div>
<div class="a" style="left:173px;top:40px;width:50px;height:23px;background:#fff;border-bottom:1px solid #f0f0f0"></div>
<div class="t" style="left:19px;top:46.5px;color:#000">Масштаб документа 1:</div>
<div class="a" style="left:173px;top:40px;width:50px;height:23px;overflow:hidden"><div class="t" style="left:6px;top:6.5px;color:#000">200</div></div>
<div class="a" style="left:11px;top:63px;width:161px;height:23px;background:#99c9f7;border-bottom:1px solid #f0f0f0"></div>
<div class="a" style="left:0px;top:63px;width:11px;height:23px;background:#99c9f7"></div>
<div class="a" style="left:172px;top:63px;width:1px;height:23px;background:#f0f0f0"></div>
<div class="a" style="left:173px;top:63px;width:50px;height:23px;background:#fff;border-bottom:1px solid #f0f0f0"></div>
<div class="t" style="left:19px;top:69.5px;color:#000">Масштаб модели 1:</div>
<div class="a" style="left:173px;top:63px;width:50px;height:23px;overflow:hidden"><div class="t" style="left:6px;top:6.5px;color:#000">1</div></div>
<div class="a" style="left:0;top:86px;width:223px;height:18px;background:#e1e1e1"></div>
<svg class="a" style="left:4px;top:91px" width="6" height="6"><path d="M6 0V6H0Z" fill="#2c2c64"/></svg>
<div class="t" style="left:18px;top:90px;font-weight:bold;color:#000">Отображение и хранение</div>
<div class="a" style="left:11px;top:104px;width:161px;height:23px;background:#fff;border-bottom:1px solid #f0f0f0"></div>
<div class="a" style="left:172px;top:104px;width:1px;height:23px;background:#f0f0f0"></div>
<div class="a" style="left:173px;top:104px;width:50px;height:23px;background:#fff;border-bottom:1px solid #f0f0f0"></div>
<div class="t" style="left:19px;top:110.5px;color:#000">Путь</div>
<div class="a" style="left:173px;top:104px;width:50px;height:23px;overflow:hidden"><div class="t" style="left:6px;top:6.5px;color:#8a8a8a">C:\User</div></div>
<div class="a" style="left:11px;top:127px;width:161px;height:23px;background:#fff;border-bottom:1px solid #f0f0f0"></div>
<div class="a" style="left:172px;top:127px;width:1px;height:23px;background:#f0f0f0"></div>
<div class="a" style="left:173px;top:127px;width:50px;height:23px;background:#fff;border-bottom:1px solid #f0f0f0"></div>
<div class="t" style="left:19px;top:133.5px;color:#000">Раздел</div>
<div class="a" style="left:175px;top:128px;width:43px;height:21px;background:#fff;border:1px solid #333;border-right-color:#ddd;border-bottom-color:#ddd;overflow:hidden"><div class="t" style="left:2px;top:5px;color:#000">Чер</div><div class="a" style="left:25px;top:1px;width:16px;height:17px;background:#e8e8e8;border-left:1px solid #fff;border-right:1px solid #777;border-bottom:1px solid #777"></div><svg class="a" style="left:29px;top:7px" width="8" height="5"><path d="M0 0h8L4 5z" fill="#000"/></svg></div>
</div>
 <div class="a" style="left:949px;top:616px;width:224px;height:4px;background:#f0f0f0"></div>
 <div class="a" style="left:949px;top:620px;width:224px;height:41px;background:#e3e3e3;border:1px solid #b8b8b8"></div>
 <div class="t" style="left:952px;top:627px;font-weight:bold;font-size:12px">Масштаб модели 1:</div>
 <div class="t" style="left:955px;top:645px;font-size:12px">Количество миллиметров в одной</div>
 <!-- grip -->
 <svg class="a" style="left:1159px;top:669px" width="10" height="10" viewBox="0 0 10 10" fill="#9a9a9a">
  <rect x="7" y="1" width="2" height="2"/><rect x="4" y="4" width="2" height="2"/><rect x="7" y="4" width="2" height="2"/>
  <rect x="1" y="7" width="2" height="2"/><rect x="4" y="7" width="2" height="2"/><rect x="7" y="7" width="2" height="2"/>
 </svg>
</div>
</body></html>
